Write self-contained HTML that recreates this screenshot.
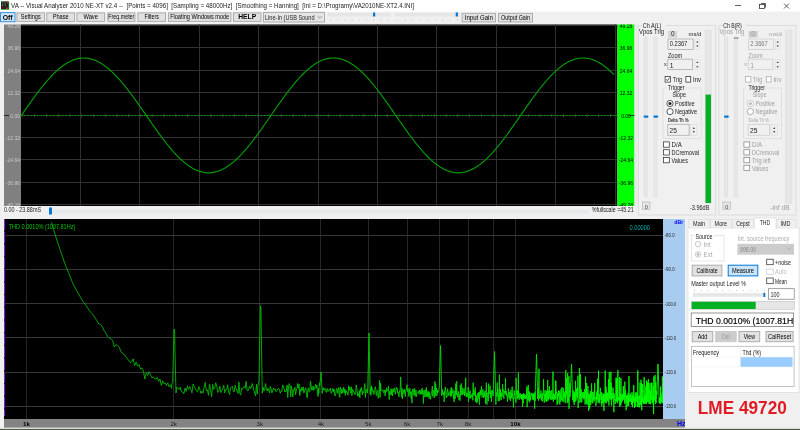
<!DOCTYPE html><html><head><meta charset="utf-8"><style>html,body{margin:0;padding:0;width:800px;height:430px;overflow:hidden;background:#f0f0f0}svg{display:block;will-change:transform;font-family:"Liberation Sans",sans-serif}</style></head><body><svg width="800" height="430" viewBox="0 0 800 430"><rect x="0" y="0" width="800" height="430" fill="#f0f0f0" />
<defs><linearGradient id="spg" gradientUnits="userSpaceOnUse" x1="170" y1="0" x2="663" y2="0"><stop offset="0" stop-color="#00b400"/><stop offset="0.5" stop-color="#00d000"/><stop offset="1" stop-color="#00ff00"/></linearGradient></defs>
<rect x="0" y="0" width="800" height="11.5" fill="#ffffff" />
<rect x="1" y="1.5" width="8.2" height="8.3" fill="#20c020" />
<rect x="1" y="1.5" width="7.6" height="7.6" fill="#1a1f24" />
<rect x="6.8" y="1.8" width="1.6" height="1.6" fill="#e02030" />
<rect x="2.2" y="6.6" width="1.6" height="1.8" fill="#b00010" />
<rect x="5.8" y="7.6" width="2" height="1.5" fill="#e03040" />
<rect x="4.6" y="2.6" width="1.2" height="1.2" fill="#908020" />
<rect x="2" y="4.4" width="1.2" height="1.2" fill="#a0a020" />
<rect x="4.6" y="4.6" width="1.2" height="1.2" fill="#40a0a0" />
<rect x="2.2" y="2.2" width="1.2" height="1.2" fill="#3080a0" />
<text x="11" y="8.3" font-size="6.6" fill="#222" font-weight="normal" text-anchor="start" font-family="Liberation Sans" textLength="403" lengthAdjust="spacingAndGlyphs" style="white-space:pre">VA -- Visual Analyser 2010 NE-XT v2.4 --  [Points = 4096]  [Sampling = 48000Hz]  [Smoothing = Hanning]  [Ini = D:\Programy\VA2010NE-XT2.4.INI]</text>
<line x1="735" y1="5.5" x2="741" y2="5.5" stroke="#333" stroke-width="0.8" />
<rect x="759.5" y="4.5" width="5" height="4" fill="none" stroke="#333" stroke-width="0.8" />
<line x1="761" y1="3.5" x2="765.5" y2="3.5" stroke="#333" stroke-width="0.8" />
<line x1="765.5" y1="3.5" x2="765.5" y2="7.5" stroke="#333" stroke-width="0.8" />
<line x1="784" y1="3.5" x2="789" y2="8.5" stroke="#333" stroke-width="0.8" />
<line x1="789" y1="3.5" x2="784" y2="8.5" stroke="#333" stroke-width="0.8" />
<rect x="0.5" y="12.6" width="14.5" height="9.099999999999998" fill="#cce4f7" stroke="#3c8fd8" stroke-width="1" />
<text x="7.7" y="20.3" font-size="6.8" fill="#000" font-weight="bold" text-anchor="middle" font-family="Liberation Sans" textLength="10" lengthAdjust="spacingAndGlyphs" >Off</text>
<rect x="16.9" y="12.9" width="27.6" height="8.499999999999998" fill="#e1e1e1" stroke="#adadad" stroke-width="1" />
<text x="30.7" y="19.189999999999998" font-size="6.5" fill="#000" font-weight="normal" text-anchor="middle" font-family="Liberation Sans" textLength="20" lengthAdjust="spacingAndGlyphs" >Settings</text>
<rect x="46.8" y="12.9" width="27.700000000000003" height="8.499999999999998" fill="#e1e1e1" stroke="#adadad" stroke-width="1" />
<text x="60.65" y="19.189999999999998" font-size="6.5" fill="#000" font-weight="normal" text-anchor="middle" font-family="Liberation Sans" textLength="16" lengthAdjust="spacingAndGlyphs" >Phase</text>
<rect x="76.9" y="12.9" width="27.599999999999994" height="8.499999999999998" fill="#e1e1e1" stroke="#adadad" stroke-width="1" />
<text x="90.7" y="19.189999999999998" font-size="6.5" fill="#000" font-weight="normal" text-anchor="middle" font-family="Liberation Sans" textLength="14.5" lengthAdjust="spacingAndGlyphs" >Wave</text>
<rect x="107.8" y="12.9" width="27.10000000000001" height="8.499999999999998" fill="#e1e1e1" stroke="#adadad" stroke-width="1" />
<text x="121.35" y="19.189999999999998" font-size="6.5" fill="#000" font-weight="normal" text-anchor="middle" font-family="Liberation Sans" textLength="26" lengthAdjust="spacingAndGlyphs" >Freq.meter</text>
<rect x="137.9" y="12.9" width="27.599999999999994" height="8.499999999999998" fill="#e1e1e1" stroke="#adadad" stroke-width="1" />
<text x="151.7" y="19.189999999999998" font-size="6.5" fill="#000" font-weight="normal" text-anchor="middle" font-family="Liberation Sans" textLength="14.5" lengthAdjust="spacingAndGlyphs" >Filters</text>
<rect x="168.5" y="12.9" width="62.400000000000006" height="8.499999999999998" fill="#e1e1e1" stroke="#adadad" stroke-width="1" />
<text x="199.7" y="19.189999999999998" font-size="6.5" fill="#000" font-weight="normal" text-anchor="middle" font-family="Liberation Sans" textLength="59" lengthAdjust="spacingAndGlyphs" >Floating Windows mode</text>
<rect x="233.5" y="12.9" width="27.5" height="8.499999999999998" fill="#e1e1e1" stroke="#adadad" stroke-width="1" />
<text x="247.25" y="19.298" font-size="6.8" fill="#000" font-weight="bold" text-anchor="middle" font-family="Liberation Sans" textLength="18" lengthAdjust="spacingAndGlyphs" >HELP</text>
<rect x="263.5" y="12.4" width="61" height="9.6" fill="#e5e5e5" stroke="#adadad" stroke-width="1" />
<text x="265" y="19.9" font-size="6.8" fill="#222" font-weight="normal" text-anchor="start" font-family="Liberation Sans" textLength="49.5" lengthAdjust="spacingAndGlyphs" >Line-In (USB Sound</text>
<polyline points="317.8,16 320,18.2 322.2,16" fill="none" stroke="#666" stroke-width="0.6"/>
<rect x="328" y="13.5" width="62" height="2.5" fill="#e7e7e7" stroke="#dcdcdc" stroke-width="0.5" />
<rect x="330.0" y="19.5" width="0.6" height="1" fill="#aaa" />
<rect x="337.25" y="19.5" width="0.6" height="1" fill="#aaa" />
<rect x="344.5" y="19.5" width="0.6" height="1" fill="#aaa" />
<rect x="351.75" y="19.5" width="0.6" height="1" fill="#aaa" />
<rect x="359.0" y="19.5" width="0.6" height="1" fill="#aaa" />
<rect x="366.25" y="19.5" width="0.6" height="1" fill="#aaa" />
<rect x="373.5" y="19.5" width="0.6" height="1" fill="#aaa" />
<rect x="380.75" y="19.5" width="0.6" height="1" fill="#aaa" />
<rect x="388.0" y="19.5" width="0.6" height="1" fill="#aaa" />
<rect x="373" y="12.5" width="2.2" height="4" fill="#0078d7" />
<rect x="395.6" y="13.5" width="63.39999999999998" height="2.5" fill="#e7e7e7" stroke="#dcdcdc" stroke-width="0.5" />
<rect x="397.6" y="19.5" width="0.6" height="1" fill="#aaa" />
<rect x="405.02500000000003" y="19.5" width="0.6" height="1" fill="#aaa" />
<rect x="412.45000000000005" y="19.5" width="0.6" height="1" fill="#aaa" />
<rect x="419.875" y="19.5" width="0.6" height="1" fill="#aaa" />
<rect x="427.3" y="19.5" width="0.6" height="1" fill="#aaa" />
<rect x="434.725" y="19.5" width="0.6" height="1" fill="#aaa" />
<rect x="442.15" y="19.5" width="0.6" height="1" fill="#aaa" />
<rect x="449.575" y="19.5" width="0.6" height="1" fill="#aaa" />
<rect x="457.0" y="19.5" width="0.6" height="1" fill="#aaa" />
<rect x="455.7" y="12.5" width="2.2" height="4" fill="#0078d7" />
<rect x="462.1" y="13.4" width="33.39999999999998" height="8.499999999999998" fill="#e1e1e1" stroke="#adadad" stroke-width="1" />
<text x="478.8" y="19.689999999999998" font-size="6.5" fill="#000" font-weight="normal" text-anchor="middle" font-family="Liberation Sans" textLength="28" lengthAdjust="spacingAndGlyphs" >Input Gain</text>
<rect x="498.5" y="13.4" width="34" height="8.499999999999998" fill="#e1e1e1" stroke="#adadad" stroke-width="1" />
<text x="515.5" y="19.689999999999998" font-size="6.5" fill="#000" font-weight="normal" text-anchor="middle" font-family="Liberation Sans" textLength="29" lengthAdjust="spacingAndGlyphs" >Output Gain</text>
<rect x="4" y="24.5" width="17" height="181.5" fill="#808080" />
<rect x="21" y="24.5" width="596.4" height="181.5" fill="#000" />
<line x1="80.5" y1="24.5" x2="80.5" y2="206" stroke="#303030" stroke-width="1" />
<line x1="139.5" y1="24.5" x2="139.5" y2="206" stroke="#303030" stroke-width="1" />
<line x1="199.5" y1="24.5" x2="199.5" y2="206" stroke="#303030" stroke-width="1" />
<line x1="258.5" y1="24.5" x2="258.5" y2="206" stroke="#303030" stroke-width="1" />
<line x1="318.5" y1="24.5" x2="318.5" y2="206" stroke="#303030" stroke-width="1" />
<line x1="377.5" y1="24.5" x2="377.5" y2="206" stroke="#303030" stroke-width="1" />
<line x1="436.5" y1="24.5" x2="436.5" y2="206" stroke="#303030" stroke-width="1" />
<line x1="496.5" y1="24.5" x2="496.5" y2="206" stroke="#303030" stroke-width="1" />
<line x1="555.5" y1="24.5" x2="555.5" y2="206" stroke="#303030" stroke-width="1" />
<line x1="615.5" y1="24.5" x2="615.5" y2="206" stroke="#303030" stroke-width="1" />
<line x1="21" y1="25.5" x2="617.4" y2="25.5" stroke="#323232" stroke-width="1" />
<line x1="21" y1="47.5" x2="617.4" y2="47.5" stroke="#323232" stroke-width="1" />
<line x1="21" y1="70.5" x2="617.4" y2="70.5" stroke="#323232" stroke-width="1" />
<line x1="21" y1="92.5" x2="617.4" y2="92.5" stroke="#323232" stroke-width="1" />
<line x1="21" y1="115.5" x2="617.4" y2="115.5" stroke="#323232" stroke-width="1" />
<line x1="21" y1="137.5" x2="617.4" y2="137.5" stroke="#323232" stroke-width="1" />
<line x1="21" y1="159.5" x2="617.4" y2="159.5" stroke="#323232" stroke-width="1" />
<line x1="21" y1="182.5" x2="617.4" y2="182.5" stroke="#323232" stroke-width="1" />
<line x1="21" y1="204.5" x2="617.4" y2="204.5" stroke="#323232" stroke-width="1" />
<clipPath id="scc"><rect x="0" y="24.5" width="800" height="181.5"/></clipPath><g clip-path="url(#scc)">
<text x="20" y="27.6" font-size="5" fill="#c8c8c8" font-weight="normal" text-anchor="end" font-family="Liberation Sans" >49.28</text>
<text x="20" y="49.6" font-size="5" fill="#c8c8c8" font-weight="normal" text-anchor="end" font-family="Liberation Sans" >36.96</text>
<text x="20" y="72.6" font-size="5" fill="#c8c8c8" font-weight="normal" text-anchor="end" font-family="Liberation Sans" >24.64</text>
<text x="20" y="94.6" font-size="5" fill="#c8c8c8" font-weight="normal" text-anchor="end" font-family="Liberation Sans" >12.32</text>
<text x="20" y="117.6" font-size="5" fill="#c8c8c8" font-weight="normal" text-anchor="end" font-family="Liberation Sans" >0.00</text>
<text x="20" y="139.6" font-size="5" fill="#c8c8c8" font-weight="normal" text-anchor="end" font-family="Liberation Sans" >-12.32</text>
<text x="20" y="161.6" font-size="5" fill="#c8c8c8" font-weight="normal" text-anchor="end" font-family="Liberation Sans" >-24.64</text>
<text x="20" y="184.6" font-size="5" fill="#c8c8c8" font-weight="normal" text-anchor="end" font-family="Liberation Sans" >-36.96</text>
<text x="20" y="206.6" font-size="5" fill="#c8c8c8" font-weight="normal" text-anchor="end" font-family="Liberation Sans" >-49.28</text>
</g>
<line x1="4" y1="115.5" x2="9" y2="115.5" stroke="#111" stroke-width="0.8" />
<line x1="23.0" y1="113.5" x2="23.0" y2="117.5" stroke="#505050" stroke-width="0.6" />
<line x1="34.75" y1="113.5" x2="34.75" y2="117.5" stroke="#505050" stroke-width="0.6" />
<line x1="46.5" y1="113.5" x2="46.5" y2="117.5" stroke="#505050" stroke-width="0.6" />
<line x1="58.25" y1="113.5" x2="58.25" y2="117.5" stroke="#505050" stroke-width="0.6" />
<line x1="70.0" y1="113.5" x2="70.0" y2="117.5" stroke="#505050" stroke-width="0.6" />
<line x1="81.75" y1="113.5" x2="81.75" y2="117.5" stroke="#505050" stroke-width="0.6" />
<line x1="93.5" y1="113.5" x2="93.5" y2="117.5" stroke="#505050" stroke-width="0.6" />
<line x1="105.25" y1="113.5" x2="105.25" y2="117.5" stroke="#505050" stroke-width="0.6" />
<line x1="117.0" y1="113.5" x2="117.0" y2="117.5" stroke="#505050" stroke-width="0.6" />
<line x1="128.75" y1="113.5" x2="128.75" y2="117.5" stroke="#505050" stroke-width="0.6" />
<line x1="140.5" y1="113.5" x2="140.5" y2="117.5" stroke="#505050" stroke-width="0.6" />
<line x1="152.25" y1="113.5" x2="152.25" y2="117.5" stroke="#505050" stroke-width="0.6" />
<line x1="164.0" y1="113.5" x2="164.0" y2="117.5" stroke="#505050" stroke-width="0.6" />
<line x1="175.75" y1="113.5" x2="175.75" y2="117.5" stroke="#505050" stroke-width="0.6" />
<line x1="187.5" y1="113.5" x2="187.5" y2="117.5" stroke="#505050" stroke-width="0.6" />
<line x1="199.25" y1="113.5" x2="199.25" y2="117.5" stroke="#505050" stroke-width="0.6" />
<line x1="211.0" y1="113.5" x2="211.0" y2="117.5" stroke="#505050" stroke-width="0.6" />
<line x1="222.75" y1="113.5" x2="222.75" y2="117.5" stroke="#505050" stroke-width="0.6" />
<line x1="234.5" y1="113.5" x2="234.5" y2="117.5" stroke="#505050" stroke-width="0.6" />
<line x1="246.25" y1="113.5" x2="246.25" y2="117.5" stroke="#505050" stroke-width="0.6" />
<line x1="258.0" y1="113.5" x2="258.0" y2="117.5" stroke="#505050" stroke-width="0.6" />
<line x1="269.75" y1="113.5" x2="269.75" y2="117.5" stroke="#505050" stroke-width="0.6" />
<line x1="281.5" y1="113.5" x2="281.5" y2="117.5" stroke="#505050" stroke-width="0.6" />
<line x1="293.25" y1="113.5" x2="293.25" y2="117.5" stroke="#505050" stroke-width="0.6" />
<line x1="305.0" y1="113.5" x2="305.0" y2="117.5" stroke="#505050" stroke-width="0.6" />
<line x1="316.75" y1="113.5" x2="316.75" y2="117.5" stroke="#505050" stroke-width="0.6" />
<line x1="328.5" y1="113.5" x2="328.5" y2="117.5" stroke="#505050" stroke-width="0.6" />
<line x1="340.25" y1="113.5" x2="340.25" y2="117.5" stroke="#505050" stroke-width="0.6" />
<line x1="352.0" y1="113.5" x2="352.0" y2="117.5" stroke="#505050" stroke-width="0.6" />
<line x1="363.75" y1="113.5" x2="363.75" y2="117.5" stroke="#505050" stroke-width="0.6" />
<line x1="375.5" y1="113.5" x2="375.5" y2="117.5" stroke="#505050" stroke-width="0.6" />
<line x1="387.25" y1="113.5" x2="387.25" y2="117.5" stroke="#505050" stroke-width="0.6" />
<line x1="399.0" y1="113.5" x2="399.0" y2="117.5" stroke="#505050" stroke-width="0.6" />
<line x1="410.75" y1="113.5" x2="410.75" y2="117.5" stroke="#505050" stroke-width="0.6" />
<line x1="422.5" y1="113.5" x2="422.5" y2="117.5" stroke="#505050" stroke-width="0.6" />
<line x1="434.25" y1="113.5" x2="434.25" y2="117.5" stroke="#505050" stroke-width="0.6" />
<line x1="446.0" y1="113.5" x2="446.0" y2="117.5" stroke="#505050" stroke-width="0.6" />
<line x1="457.75" y1="113.5" x2="457.75" y2="117.5" stroke="#505050" stroke-width="0.6" />
<line x1="469.5" y1="113.5" x2="469.5" y2="117.5" stroke="#505050" stroke-width="0.6" />
<line x1="481.25" y1="113.5" x2="481.25" y2="117.5" stroke="#505050" stroke-width="0.6" />
<line x1="493.0" y1="113.5" x2="493.0" y2="117.5" stroke="#505050" stroke-width="0.6" />
<line x1="504.75" y1="113.5" x2="504.75" y2="117.5" stroke="#505050" stroke-width="0.6" />
<line x1="516.5" y1="113.5" x2="516.5" y2="117.5" stroke="#505050" stroke-width="0.6" />
<line x1="528.25" y1="113.5" x2="528.25" y2="117.5" stroke="#505050" stroke-width="0.6" />
<line x1="540.0" y1="113.5" x2="540.0" y2="117.5" stroke="#505050" stroke-width="0.6" />
<line x1="551.75" y1="113.5" x2="551.75" y2="117.5" stroke="#505050" stroke-width="0.6" />
<line x1="563.5" y1="113.5" x2="563.5" y2="117.5" stroke="#505050" stroke-width="0.6" />
<line x1="575.25" y1="113.5" x2="575.25" y2="117.5" stroke="#505050" stroke-width="0.6" />
<line x1="587.0" y1="113.5" x2="587.0" y2="117.5" stroke="#505050" stroke-width="0.6" />
<line x1="598.75" y1="113.5" x2="598.75" y2="117.5" stroke="#505050" stroke-width="0.6" />
<line x1="610.5" y1="113.5" x2="610.5" y2="117.5" stroke="#505050" stroke-width="0.6" />
<line x1="21" y1="115.5" x2="617.4" y2="115.5" stroke="#009c00" stroke-width="1.1" stroke-dasharray="1.7,1.45"/>
<polyline points="21.0,116.0 21.5,115.3 22.0,114.5 22.5,113.8 23.0,113.1 23.5,112.4 24.0,111.6 24.5,110.9 25.0,110.2 25.5,109.5 26.0,108.8 26.5,108.1 27.0,107.3 27.5,106.6 28.0,105.9 28.5,105.2 29.0,104.5 29.5,103.8 30.0,103.1 30.5,102.4 31.0,101.7 31.5,101.0 32.0,100.3 32.5,99.6 33.0,98.9 33.5,98.2 34.0,97.5 34.5,96.8 35.0,96.1 35.5,95.5 36.0,94.8 36.5,94.1 37.0,93.4 37.5,92.8 38.0,92.1 38.5,91.4 39.0,90.8 39.5,90.1 40.0,89.5 40.5,88.9 41.0,88.2 41.5,87.6 42.0,87.0 42.5,86.3 43.0,85.7 43.5,85.1 44.0,84.5 44.5,83.9 45.0,83.3 45.5,82.7 46.0,82.1 46.5,81.5 47.0,80.9 47.5,80.3 48.0,79.8 48.5,79.2 49.0,78.7 49.5,78.1 50.0,77.6 50.5,77.0 51.0,76.5 51.5,76.0 52.0,75.4 52.5,74.9 53.0,74.4 53.5,73.9 54.0,73.4 54.5,72.9 55.0,72.4 55.5,72.0 56.0,71.5 56.5,71.0 57.0,70.6 57.5,70.1 58.0,69.7 58.5,69.3 59.0,68.8 59.5,68.4 60.0,68.0 60.5,67.6 61.0,67.2 61.5,66.8 62.0,66.4 62.5,66.1 63.0,65.7 63.5,65.3 64.0,65.0 64.5,64.6 65.0,64.3 65.5,64.0 66.0,63.7 66.5,63.4 67.0,63.1 67.5,62.8 68.0,62.5 68.5,62.2 69.0,61.9 69.5,61.7 70.0,61.4 70.5,61.2 71.0,61.0 71.5,60.7 72.0,60.5 72.5,60.3 73.0,60.1 73.5,59.9 74.0,59.7 74.5,59.6 75.0,59.4 75.5,59.2 76.0,59.1 76.5,59.0 77.0,58.8 77.5,58.7 78.0,58.6 78.5,58.5 79.0,58.4 79.5,58.3 80.0,58.3 80.5,58.2 81.0,58.1 81.5,58.1 82.0,58.1 82.5,58.0 83.0,58.0 83.5,58.0 84.0,58.0 84.5,58.0 85.0,58.0 85.5,58.1 86.0,58.1 86.5,58.1 87.0,58.2 87.5,58.2 88.0,58.3 88.5,58.4 89.0,58.5 89.5,58.6 90.0,58.7 90.5,58.8 91.0,58.9 91.5,59.1 92.0,59.2 92.5,59.4 93.0,59.5 93.5,59.7 94.0,59.9 94.5,60.1 95.0,60.3 95.5,60.5 96.0,60.7 96.5,60.9 97.0,61.1 97.5,61.4 98.0,61.6 98.5,61.9 99.0,62.2 99.5,62.4 100.0,62.7 100.5,63.0 101.0,63.3 101.5,63.6 102.0,63.9 102.5,64.2 103.0,64.6 103.5,64.9 104.0,65.3 104.5,65.6 105.0,66.0 105.5,66.4 106.0,66.7 106.5,67.1 107.0,67.5 107.5,67.9 108.0,68.3 108.5,68.7 109.0,69.2 109.5,69.6 110.0,70.0 110.5,70.5 111.0,70.9 111.5,71.4 112.0,71.9 112.5,72.3 113.0,72.8 113.5,73.3 114.0,73.8 114.5,74.3 115.0,74.8 115.5,75.3 116.0,75.8 116.5,76.4 117.0,76.9 117.5,77.4 118.0,78.0 118.5,78.5 119.0,79.1 119.5,79.7 120.0,80.2 120.5,80.8 121.0,81.4 121.5,82.0 122.0,82.6 122.5,83.2 123.0,83.8 123.5,84.4 124.0,85.0 124.5,85.6 125.0,86.2 125.5,86.8 126.0,87.5 126.5,88.1 127.0,88.7 127.5,89.4 128.0,90.0 128.5,90.7 129.0,91.3 129.5,92.0 130.0,92.6 130.5,93.3 131.0,94.0 131.5,94.6 132.0,95.3 132.5,96.0 133.0,96.7 133.5,97.4 134.0,98.0 134.5,98.7 135.0,99.4 135.5,100.1 136.0,100.8 136.5,101.5 137.0,102.2 137.5,102.9 138.0,103.6 138.5,104.3 139.0,105.1 139.5,105.8 140.0,106.5 140.5,107.2 141.0,107.9 141.5,108.6 142.0,109.3 142.5,110.1 143.0,110.8 143.5,111.5 144.0,112.2 144.5,112.9 145.0,113.7 145.5,114.4 146.0,115.1 146.5,115.8 147.0,116.6 147.5,117.3 148.0,118.0 148.5,118.7 149.0,119.4 149.5,120.2 150.0,120.9 150.5,121.6 151.0,122.3 151.5,123.0 152.0,123.8 152.5,124.5 153.0,125.2 153.5,125.9 154.0,126.6 154.5,127.3 155.0,128.0 155.5,128.7 156.0,129.4 156.5,130.1 157.0,130.8 157.5,131.5 158.0,132.2 158.5,132.9 159.0,133.6 159.5,134.3 160.0,134.9 160.5,135.6 161.0,136.3 161.5,137.0 162.0,137.6 162.5,138.3 163.0,139.0 163.5,139.6 164.0,140.3 164.5,140.9 165.0,141.6 165.5,142.2 166.0,142.8 166.5,143.5 167.0,144.1 167.5,144.7 168.0,145.3 168.5,146.0 169.0,146.6 169.5,147.2 170.0,147.8 170.5,148.4 171.0,149.0 171.5,149.5 172.0,150.1 172.5,150.7 173.0,151.3 173.5,151.8 174.0,152.4 174.5,152.9 175.0,153.5 175.5,154.0 176.0,154.5 176.5,155.1 177.0,155.6 177.5,156.1 178.0,156.6 178.5,157.1 179.0,157.6 179.5,158.1 180.0,158.6 180.5,159.0 181.0,159.5 181.5,160.0 182.0,160.4 182.5,160.9 183.0,161.3 183.5,161.7 184.0,162.1 184.5,162.6 185.0,163.0 185.5,163.4 186.0,163.8 186.5,164.1 187.0,164.5 187.5,164.9 188.0,165.3 188.5,165.6 189.0,166.0 189.5,166.3 190.0,166.6 190.5,166.9 191.0,167.3 191.5,167.6 192.0,167.9 192.5,168.2 193.0,168.4 193.5,168.7 194.0,169.0 194.5,169.2 195.0,169.5 195.5,169.7 196.0,169.9 196.5,170.2 197.0,170.4 197.5,170.6 198.0,170.8 198.5,171.0 199.0,171.1 199.5,171.3 200.0,171.5 200.5,171.6 201.0,171.8 201.5,171.9 202.0,172.0 202.5,172.1 203.0,172.2 203.5,172.3 204.0,172.4 204.5,172.5 205.0,172.6 205.5,172.6 206.0,172.7 206.5,172.7 207.0,172.8 207.5,172.8 208.0,172.8 208.5,172.8 209.0,172.8 209.5,172.8 210.0,172.8 210.5,172.7 211.0,172.7 211.5,172.6 212.0,172.6 212.5,172.5 213.0,172.4 213.5,172.4 214.0,172.3 214.5,172.2 215.0,172.1 215.5,171.9 216.0,171.8 216.5,171.7 217.0,171.5 217.5,171.4 218.0,171.2 218.5,171.0 219.0,170.8 219.5,170.7 220.0,170.5 220.5,170.2 221.0,170.0 221.5,169.8 222.0,169.6 222.5,169.3 223.0,169.1 223.5,168.8 224.0,168.5 224.5,168.3 225.0,168.0 225.5,167.7 226.0,167.4 226.5,167.1 227.0,166.8 227.5,166.4 228.0,166.1 228.5,165.7 229.0,165.4 229.5,165.0 230.0,164.7 230.5,164.3 231.0,163.9 231.5,163.5 232.0,163.1 232.5,162.7 233.0,162.3 233.5,161.9 234.0,161.5 234.5,161.0 235.0,160.6 235.5,160.1 236.0,159.7 236.5,159.2 237.0,158.7 237.5,158.3 238.0,157.8 238.5,157.3 239.0,156.8 239.5,156.3 240.0,155.8 240.5,155.3 241.0,154.7 241.5,154.2 242.0,153.7 242.5,153.1 243.0,152.6 243.5,152.0 244.0,151.5 244.5,150.9 245.0,150.3 245.5,149.8 246.0,149.2 246.5,148.6 247.0,148.0 247.5,147.4 248.0,146.8 248.5,146.2 249.0,145.6 249.5,145.0 250.0,144.3 250.5,143.7 251.0,143.1 251.5,142.5 252.0,141.8 252.5,141.2 253.0,140.5 253.5,139.9 254.0,139.2 254.5,138.6 255.0,137.9 255.5,137.2 256.0,136.6 256.5,135.9 257.0,135.2 257.5,134.5 258.0,133.9 258.5,133.2 259.0,132.5 259.5,131.8 260.0,131.1 260.5,130.4 261.0,129.7 261.5,129.0 262.0,128.3 262.5,127.6 263.0,126.9 263.5,126.2 264.0,125.5 264.5,124.8 265.0,124.0 265.5,123.3 266.0,122.6 266.5,121.9 267.0,121.2 267.5,120.5 268.0,119.7 268.5,119.0 269.0,118.3 269.5,117.6 270.0,116.8 270.5,116.1 271.0,115.4 271.5,114.7 272.0,114.0 272.5,113.2 273.0,112.5 273.5,111.8 274.0,111.1 274.5,110.3 275.0,109.6 275.5,108.9 276.0,108.2 276.5,107.5 277.0,106.8 277.5,106.0 278.0,105.3 278.5,104.6 279.0,103.9 279.5,103.2 280.0,102.5 280.5,101.8 281.0,101.1 281.5,100.4 282.0,99.7 282.5,99.0 283.0,98.3 283.5,97.6 284.0,96.9 284.5,96.3 285.0,95.6 285.5,94.9 286.0,94.2 286.5,93.6 287.0,92.9 287.5,92.2 288.0,91.6 288.5,90.9 289.0,90.3 289.5,89.6 290.0,89.0 290.5,88.3 291.0,87.7 291.5,87.1 292.0,86.5 292.5,85.8 293.0,85.2 293.5,84.6 294.0,84.0 294.5,83.4 295.0,82.8 295.5,82.2 296.0,81.6 296.5,81.0 297.0,80.5 297.5,79.9 298.0,79.3 298.5,78.8 299.0,78.2 299.5,77.7 300.0,77.1 300.5,76.6 301.0,76.1 301.5,75.5 302.0,75.0 302.5,74.5 303.0,74.0 303.5,73.5 304.0,73.0 304.5,72.5 305.0,72.1 305.5,71.6 306.0,71.1 306.5,70.7 307.0,70.2 307.5,69.8 308.0,69.3 308.5,68.9 309.0,68.5 309.5,68.1 310.0,67.7 310.5,67.3 311.0,66.9 311.5,66.5 312.0,66.1 312.5,65.8 313.0,65.4 313.5,65.1 314.0,64.7 314.5,64.4 315.0,64.0 315.5,63.7 316.0,63.4 316.5,63.1 317.0,62.8 317.5,62.5 318.0,62.3 318.5,62.0 319.0,61.7 319.5,61.5 320.0,61.2 320.5,61.0 321.0,60.8 321.5,60.6 322.0,60.3 322.5,60.1 323.0,60.0 323.5,59.8 324.0,59.6 324.5,59.4 325.0,59.3 325.5,59.1 326.0,59.0 326.5,58.9 327.0,58.7 327.5,58.6 328.0,58.5 328.5,58.4 329.0,58.4 329.5,58.3 330.0,58.2 330.5,58.2 331.0,58.1 331.5,58.1 332.0,58.0 332.5,58.0 333.0,58.0 333.5,58.0 334.0,58.0 334.5,58.0 335.0,58.0 335.5,58.1 336.0,58.1 336.5,58.2 337.0,58.2 337.5,58.3 338.0,58.4 338.5,58.5 339.0,58.6 339.5,58.7 340.0,58.8 340.5,58.9 341.0,59.0 341.5,59.2 342.0,59.3 342.5,59.5 343.0,59.7 343.5,59.8 344.0,60.0 344.5,60.2 345.0,60.4 345.5,60.6 346.0,60.9 346.5,61.1 347.0,61.3 347.5,61.6 348.0,61.8 348.5,62.1 349.0,62.4 349.5,62.6 350.0,62.9 350.5,63.2 351.0,63.5 351.5,63.9 352.0,64.2 352.5,64.5 353.0,64.8 353.5,65.2 354.0,65.5 354.5,65.9 355.0,66.3 355.5,66.7 356.0,67.0 356.5,67.4 357.0,67.8 357.5,68.2 358.0,68.7 358.5,69.1 359.0,69.5 359.5,69.9 360.0,70.4 360.5,70.8 361.0,71.3 361.5,71.8 362.0,72.2 362.5,72.7 363.0,73.2 363.5,73.7 364.0,74.2 364.5,74.7 365.0,75.2 365.5,75.7 366.0,76.3 366.5,76.8 367.0,77.3 367.5,77.9 368.0,78.4 368.5,79.0 369.0,79.5 369.5,80.1 370.0,80.7 370.5,81.3 371.0,81.8 371.5,82.4 372.0,83.0 372.5,83.6 373.0,84.2 373.5,84.8 374.0,85.5 374.5,86.1 375.0,86.7 375.5,87.3 376.0,88.0 376.5,88.6 377.0,89.2 377.5,89.9 378.0,90.5 378.5,91.2 379.0,91.8 379.5,92.5 380.0,93.2 380.5,93.8 381.0,94.5 381.5,95.2 382.0,95.9 382.5,96.5 383.0,97.2 383.5,97.9 384.0,98.6 384.5,99.3 385.0,100.0 385.5,100.7 386.0,101.4 386.5,102.1 387.0,102.8 387.5,103.5 388.0,104.2 388.5,104.9 389.0,105.6 389.5,106.3 390.0,107.0 390.5,107.8 391.0,108.5 391.5,109.2 392.0,109.9 392.5,110.6 393.0,111.4 393.5,112.1 394.0,112.8 394.5,113.5 395.0,114.2 395.5,115.0 396.0,115.7 396.5,116.4 397.0,117.1 397.5,117.9 398.0,118.6 398.5,119.3 399.0,120.0 399.5,120.7 400.0,121.5 400.5,122.2 401.0,122.9 401.5,123.6 402.0,124.3 402.5,125.0 403.0,125.7 403.5,126.5 404.0,127.2 404.5,127.9 405.0,128.6 405.5,129.3 406.0,130.0 406.5,130.7 407.0,131.4 407.5,132.1 408.0,132.8 408.5,133.4 409.0,134.1 409.5,134.8 410.0,135.5 410.5,136.2 411.0,136.8 411.5,137.5 412.0,138.2 412.5,138.8 413.0,139.5 413.5,140.1 414.0,140.8 414.5,141.4 415.0,142.1 415.5,142.7 416.0,143.3 416.5,144.0 417.0,144.6 417.5,145.2 418.0,145.8 418.5,146.4 419.0,147.0 419.5,147.6 420.0,148.2 420.5,148.8 421.0,149.4 421.5,150.0 422.0,150.6 422.5,151.1 423.0,151.7 423.5,152.3 424.0,152.8 424.5,153.4 425.0,153.9 425.5,154.4 426.0,155.0 426.5,155.5 427.0,156.0 427.5,156.5 428.0,157.0 428.5,157.5 429.0,158.0 429.5,158.5 430.0,158.9 430.5,159.4 431.0,159.9 431.5,160.3 432.0,160.8 432.5,161.2 433.0,161.6 433.5,162.1 434.0,162.5 434.5,162.9 435.0,163.3 435.5,163.7 436.0,164.1 436.5,164.4 437.0,164.8 437.5,165.2 438.0,165.5 438.5,165.9 439.0,166.2 439.5,166.6 440.0,166.9 440.5,167.2 441.0,167.5 441.5,167.8 442.0,168.1 442.5,168.4 443.0,168.6 443.5,168.9 444.0,169.2 444.5,169.4 445.0,169.7 445.5,169.9 446.0,170.1 446.5,170.3 447.0,170.5 447.5,170.7 448.0,170.9 448.5,171.1 449.0,171.3 449.5,171.4 450.0,171.6 450.5,171.7 451.0,171.9 451.5,172.0 452.0,172.1 452.5,172.2 453.0,172.3 453.5,172.4 454.0,172.5 454.5,172.6 455.0,172.6 455.5,172.7 456.0,172.7 456.5,172.7 457.0,172.8 457.5,172.8 458.0,172.8 458.5,172.8 459.0,172.8 459.5,172.8 460.0,172.7 460.5,172.7 461.0,172.7 461.5,172.6 462.0,172.5 462.5,172.5 463.0,172.4 463.5,172.3 464.0,172.2 464.5,172.1 465.0,172.0 465.5,171.8 466.0,171.7 466.5,171.6 467.0,171.4 467.5,171.2 468.0,171.1 468.5,170.9 469.0,170.7 469.5,170.5 470.0,170.3 470.5,170.1 471.0,169.8 471.5,169.6 472.0,169.4 472.5,169.1 473.0,168.9 473.5,168.6 474.0,168.3 474.5,168.0 475.0,167.7 475.5,167.4 476.0,167.1 476.5,166.8 477.0,166.5 477.5,166.2 478.0,165.8 478.5,165.5 479.0,165.1 479.5,164.7 480.0,164.4 480.5,164.0 481.0,163.6 481.5,163.2 482.0,162.8 482.5,162.4 483.0,162.0 483.5,161.5 484.0,161.1 484.5,160.7 485.0,160.2 485.5,159.8 486.0,159.3 486.5,158.8 487.0,158.4 487.5,157.9 488.0,157.4 488.5,156.9 489.0,156.4 489.5,155.9 490.0,155.4 490.5,154.8 491.0,154.3 491.5,153.8 492.0,153.2 492.5,152.7 493.0,152.1 493.5,151.6 494.0,151.0 494.5,150.5 495.0,149.9 495.5,149.3 496.0,148.7 496.5,148.1 497.0,147.5 497.5,146.9 498.0,146.3 498.5,145.7 499.0,145.1 499.5,144.5 500.0,143.8 500.5,143.2 501.0,142.6 501.5,141.9 502.0,141.3 502.5,140.7 503.0,140.0 503.5,139.4 504.0,138.7 504.5,138.0 505.0,137.4 505.5,136.7 506.0,136.0 506.5,135.3 507.0,134.7 507.5,134.0 508.0,133.3 508.5,132.6 509.0,131.9 509.5,131.2 510.0,130.5 510.5,129.8 511.0,129.1 511.5,128.4 512.0,127.7 512.5,127.0 513.0,126.3 513.5,125.6 514.0,124.9 514.5,124.2 515.0,123.5 515.5,122.7 516.0,122.0 516.5,121.3 517.0,120.6 517.5,119.9 518.0,119.2 518.5,118.4 519.0,117.7 519.5,117.0 520.0,116.3 520.5,115.5 521.0,114.8 521.5,114.1 522.0,113.4 522.5,112.7 523.0,111.9 523.5,111.2 524.0,110.5 524.5,109.8 525.0,109.1 525.5,108.3 526.0,107.6 526.5,106.9 527.0,106.2 527.5,105.5 528.0,104.8 528.5,104.1 529.0,103.4 529.5,102.6 530.0,101.9 530.5,101.2 531.0,100.5 531.5,99.8 532.0,99.2 532.5,98.5 533.0,97.8 533.5,97.1 534.0,96.4 534.5,95.7 535.0,95.0 535.5,94.4 536.0,93.7 536.5,93.0 537.0,92.4 537.5,91.7 538.0,91.1 538.5,90.4 539.0,89.8 539.5,89.1 540.0,88.5 540.5,87.8 541.0,87.2 541.5,86.6 542.0,86.0 542.5,85.3 543.0,84.7 543.5,84.1 544.0,83.5 544.5,82.9 545.0,82.3 545.5,81.7 546.0,81.1 546.5,80.6 547.0,80.0 547.5,79.4 548.0,78.9 548.5,78.3 549.0,77.8 549.5,77.2 550.0,76.7 550.5,76.2 551.0,75.6 551.5,75.1 552.0,74.6 552.5,74.1 553.0,73.6 553.5,73.1 554.0,72.6 554.5,72.1 555.0,71.7 555.5,71.2 556.0,70.8 556.5,70.3 557.0,69.9 557.5,69.4 558.0,69.0 558.5,68.6 559.0,68.2 559.5,67.8 560.0,67.4 560.5,67.0 561.0,66.6 561.5,66.2 562.0,65.8 562.5,65.5 563.0,65.1 563.5,64.8 564.0,64.4 564.5,64.1 565.0,63.8 565.5,63.5 566.0,63.2 566.5,62.9 567.0,62.6 567.5,62.3 568.0,62.0 568.5,61.8 569.0,61.5 569.5,61.3 570.0,61.0 570.5,60.8 571.0,60.6 571.5,60.4 572.0,60.2 572.5,60.0 573.0,59.8 573.5,59.6 574.0,59.5 574.5,59.3 575.0,59.2 575.5,59.0 576.0,58.9 576.5,58.8 577.0,58.7 577.5,58.5 578.0,58.5 578.5,58.4 579.0,58.3 579.5,58.2 580.0,58.2 580.5,58.1 581.0,58.1 581.5,58.0 582.0,58.0 582.5,58.0 583.0,58.0 583.5,58.0 584.0,58.0 584.5,58.0 585.0,58.1 585.5,58.1 586.0,58.2 586.5,58.2 587.0,58.3 587.5,58.4 588.0,58.5 588.5,58.5 589.0,58.7 589.5,58.8 590.0,58.9 590.5,59.0 591.0,59.2 591.5,59.3 592.0,59.5 592.5,59.6 593.0,59.8 593.5,60.0 594.0,60.2 594.5,60.4 595.0,60.6 595.5,60.8 596.0,61.0 596.5,61.3 597.0,61.5 597.5,61.8 598.0,62.0 598.5,62.3 599.0,62.6 599.5,62.9 600.0,63.2 600.5,63.5 601.0,63.8 601.5,64.1 602.0,64.4 602.5,64.8 603.0,65.1 603.5,65.5 604.0,65.8 604.5,66.2 605.0,66.6 605.5,67.0 606.0,67.4 606.5,67.8 607.0,68.2 607.5,68.6 608.0,69.0 608.5,69.4 609.0,69.9 609.5,70.3 610.0,70.8 610.5,71.2 611.0,71.7 611.5,72.1 612.0,72.6 612.5,73.1 613.0,73.6 613.5,74.1 614.0,74.6" fill="none" stroke="#00a000" stroke-width="1.15"/>
<rect x="617.4" y="24.5" width="17.100000000000023" height="181.5" fill="#00ff00" />
<g clip-path="url(#scc)">
<text x="626" y="27.6" font-size="5" fill="#000" font-weight="normal" text-anchor="middle" font-family="Liberation Sans" >49.28</text>
<text x="626" y="49.6" font-size="5" fill="#000" font-weight="normal" text-anchor="middle" font-family="Liberation Sans" >36.96</text>
<text x="626" y="72.6" font-size="5" fill="#000" font-weight="normal" text-anchor="middle" font-family="Liberation Sans" >24.64</text>
<text x="626" y="94.6" font-size="5" fill="#000" font-weight="normal" text-anchor="middle" font-family="Liberation Sans" >12.32</text>
<text x="626" y="117.6" font-size="5" fill="#000" font-weight="normal" text-anchor="middle" font-family="Liberation Sans" >0.00</text>
<text x="626" y="139.6" font-size="5" fill="#000" font-weight="normal" text-anchor="middle" font-family="Liberation Sans" >-12.32</text>
<text x="626" y="161.6" font-size="5" fill="#000" font-weight="normal" text-anchor="middle" font-family="Liberation Sans" >-24.64</text>
<text x="626" y="184.6" font-size="5" fill="#000" font-weight="normal" text-anchor="middle" font-family="Liberation Sans" >-36.96</text>
<text x="626" y="206.6" font-size="5" fill="#000" font-weight="normal" text-anchor="middle" font-family="Liberation Sans" >-49.28</text>
</g>
<line x1="629" y1="115.5" x2="636" y2="115.5" stroke="#111" stroke-width="0.8" />
<rect x="634.5" y="24.5" width="3" height="181.5" fill="#e8e8e8" />
<text x="4" y="211.7" font-size="6.6" fill="#222" font-weight="normal" text-anchor="start" font-family="Liberation Sans" textLength="37" lengthAdjust="spacingAndGlyphs" >0.00 - 23.88mS</text>
<rect x="52.5" y="209.3" width="536" height="4.5" fill="#e6e9ea" />
<rect x="49" y="207.5" width="3" height="7" fill="#0078d7" />
<text x="633.7" y="212.3" font-size="6.6" fill="#222" font-weight="normal" text-anchor="end" font-family="Liberation Sans" textLength="42" lengthAdjust="spacingAndGlyphs" >%fullscale =45.21</text>
<rect x="638.5" y="25.5" width="77" height="189.5" fill="none" stroke="#dcdcdc" stroke-width="1" />
<rect x="642" y="20" width="24" height="7" fill="#f0f0f0" />
<text x="642.8" y="27.6" font-size="6.6" fill="#222" font-weight="normal" text-anchor="start" font-family="Liberation Sans" textLength="18.6" lengthAdjust="spacingAndGlyphs" >Ch A(L)</text>
<text x="639" y="34.4" font-size="6.6" fill="#222" font-weight="normal" text-anchor="start" font-family="Liberation Sans" textLength="25" lengthAdjust="spacingAndGlyphs" >Vpos Trig</text>
<rect x="644" y="37" width="3.2" height="160" fill="#e7e7e7" stroke="#dcdcdc" stroke-width="0.5" />
<rect x="653.8" y="37" width="3.2" height="160" fill="#e7e7e7" stroke="#dcdcdc" stroke-width="0.5" />
<rect x="643.6" y="115.6" width="4.8" height="2.2" fill="#0078d7" rx="1"/>
<rect x="653.4" y="115.6" width="4.8" height="2.2" fill="#0078d7" rx="1"/>
<rect x="642.5" y="202" width="7.5" height="7.5" fill="#e5e5e5" stroke="#b0b0b0" stroke-width="0.6" />
<text x="646.3" y="208.5" font-size="5.5" fill="#444" font-weight="normal" text-anchor="middle" font-family="Liberation Sans" >0</text>
<rect x="668.6" y="31.3" width="8.2" height="5.8" fill="#d8d8d8" stroke="#c8c8c8" stroke-width="0.5" />
<text x="672.7" y="36.4" font-size="6.4" fill="#222" font-weight="normal" text-anchor="middle" font-family="Liberation Sans" >0</text>
<text x="701.4" y="35.5" font-size="6.2" fill="#222" font-weight="normal" text-anchor="end" font-family="Liberation Sans" textLength="12.8" lengthAdjust="spacingAndGlyphs" >ms/d</text>
<rect x="668" y="39" width="25.2" height="10.5" fill="#f0f0f0" stroke="#adadad" stroke-width="0.8" />
<text x="669.8" y="46" font-size="6.8" fill="#222" font-weight="normal" text-anchor="start" font-family="Liberation Sans" textLength="17.5" lengthAdjust="spacingAndGlyphs" >0.2367</text>
<rect x="694.9" y="39" width="4.8" height="10.5" fill="#f0f0f0" stroke="#dadada" stroke-width="0.5" />
<polygon points="696.1,42.4 697.3,40.9 698.5,42.4" fill="#333"/>
<polygon points="696.1,45.6 697.3,47.1 698.5,45.6" fill="#333"/>
<text x="668" y="57.9" font-size="6.8" fill="#222" font-weight="normal" text-anchor="start" font-family="Liberation Sans" textLength="14.1" lengthAdjust="spacingAndGlyphs" >Zoom</text>
<text x="663.9" y="66.3" font-size="5.5" fill="#222" font-weight="normal" text-anchor="start" font-family="Liberation Sans" >x</text>
<rect x="667.8" y="59.2" width="24.7" height="10.4" fill="#f0f0f0" stroke="#adadad" stroke-width="0.8" />
<text x="669.8" y="67.5" font-size="6.8" fill="#222" font-weight="normal" text-anchor="start" font-family="Liberation Sans" >1</text>
<rect x="694.9" y="59.5" width="4.8" height="10" fill="#f0f0f0" stroke="#dadada" stroke-width="0.5" />
<polygon points="696.1,63 697.3,61.5 698.5,63" fill="#333"/>
<polygon points="696.1,66.2 697.3,67.7 698.5,66.2" fill="#333"/>
<rect x="665.1" y="76.6" width="5.399999999999977" height="5.5" fill="#fff" stroke="#333" stroke-width="0.75" />
<polyline points="666.1,79.35 667.6,80.6 669.5,77.6" fill="none" stroke="#333" stroke-width="0.8"/>
<text x="672.7" y="82.4" font-size="6.8" fill="#222" font-weight="normal" text-anchor="start" font-family="Liberation Sans" textLength="9.3" lengthAdjust="spacingAndGlyphs" >Trig</text>
<rect x="685.9" y="76.6" width="4.800000000000068" height="5.5" fill="#fff" stroke="#333" stroke-width="0.75" />
<text x="693" y="82.4" font-size="6.8" fill="#222" font-weight="normal" text-anchor="start" font-family="Liberation Sans" textLength="8" lengthAdjust="spacingAndGlyphs" >Inv</text>
<rect x="663" y="88" width="38.2" height="50.5" fill="none" stroke="#dcdcdc" stroke-width="0.8" />
<rect x="665.5" y="85" width="20" height="5" fill="#f0f0f0" />
<text x="668" y="89.9" font-size="6.6" fill="#222" font-weight="normal" text-anchor="start" font-family="Liberation Sans" textLength="16.5" lengthAdjust="spacingAndGlyphs" >Trigger</text>
<text x="672.4" y="97.3" font-size="6.6" fill="#222" font-weight="normal" text-anchor="start" font-family="Liberation Sans" textLength="13.6" lengthAdjust="spacingAndGlyphs" >Slope</text>
<circle cx="670" cy="103.5" r="3.1" fill="#fff" stroke="#333" stroke-width="0.8"/>
<circle cx="670" cy="103.5" r="1.55" fill="#222"/>
<text x="675" y="106" font-size="6.6" fill="#222" font-weight="normal" text-anchor="start" font-family="Liberation Sans" textLength="19.5" lengthAdjust="spacingAndGlyphs" >Positive</text>
<circle cx="670" cy="111.6" r="3.1" fill="#fff" stroke="#333" stroke-width="0.8"/>
<text x="675" y="114.3" font-size="6.6" fill="#222" font-weight="normal" text-anchor="start" font-family="Liberation Sans" textLength="22" lengthAdjust="spacingAndGlyphs" >Negative</text>
<text x="668" y="121.7" font-size="5.6" fill="#333" font-weight="bold" text-anchor="start" font-family="Liberation Sans" textLength="20.5" lengthAdjust="spacingAndGlyphs" >Delta Th %</text>
<rect x="667.8" y="124.3" width="21.3" height="11" fill="#f0f0f0" stroke="#adadad" stroke-width="0.8" />
<text x="669.6" y="132.6" font-size="6.6" fill="#222" font-weight="normal" text-anchor="start" font-family="Liberation Sans" >25</text>
<rect x="690.6" y="124.6" width="6.4" height="10.6" fill="#f0f0f0" stroke="#cfcfcf" stroke-width="0.5" />
<polygon points="692.6,128.8 693.8,127.3 695,128.8" fill="#222"/>
<polygon points="692.6,131.3 693.8,132.8 695,131.3" fill="#222"/>
<rect x="663.5" y="141.9" width="5.7999999999999545" height="5.300000000000011" fill="#fff" stroke="#333" stroke-width="0.75" />
<text x="671.6" y="147.20000000000002" font-size="6.6" fill="#222" font-weight="normal" text-anchor="start" font-family="Liberation Sans" textLength="10.2" lengthAdjust="spacingAndGlyphs" >D/A</text>
<rect x="663.5" y="149.70000000000002" width="5.7999999999999545" height="5.300000000000011" fill="#fff" stroke="#333" stroke-width="0.75" />
<text x="671.6" y="155.00000000000003" font-size="6.6" fill="#222" font-weight="normal" text-anchor="start" font-family="Liberation Sans" textLength="27.3" lengthAdjust="spacingAndGlyphs" >DCremoval</text>
<rect x="663.5" y="157.5" width="5.7999999999999545" height="5.300000000000011" fill="#fff" stroke="#333" stroke-width="0.75" />
<text x="671.6" y="162.8" font-size="6.6" fill="#222" font-weight="normal" text-anchor="start" font-family="Liberation Sans" textLength="16.3" lengthAdjust="spacingAndGlyphs" >Values</text>
<rect x="705.1" y="30.2" width="6.4" height="173" fill="#e6e6e6" stroke="#dcdcdc" stroke-width="0.5" />
<rect x="705.5" y="94.6" width="5.5" height="108.4" fill="#06b025" />
<text x="709.4" y="210" font-size="6.6" fill="#222" font-weight="normal" text-anchor="end" font-family="Liberation Sans" textLength="19.5" lengthAdjust="spacingAndGlyphs" >-3.96dB</text>
<rect x="718.9" y="25.5" width="77" height="189.5" fill="none" stroke="#dcdcdc" stroke-width="1" />
<rect x="722.4" y="20" width="24" height="7" fill="#f0f0f0" />
<text x="723.1999999999999" y="27.6" font-size="6.6" fill="#222" font-weight="normal" text-anchor="start" font-family="Liberation Sans" textLength="18.6" lengthAdjust="spacingAndGlyphs" >Ch B(R)</text>
<text x="719.4" y="34.4" font-size="6.6" fill="#a0a0a0" font-weight="normal" text-anchor="start" font-family="Liberation Sans" textLength="25" lengthAdjust="spacingAndGlyphs" >Vpos Trig</text>
<rect x="724.4" y="37" width="3.2" height="160" fill="#e7e7e7" stroke="#dcdcdc" stroke-width="0.5" />
<rect x="734.1999999999999" y="37" width="3.2" height="160" fill="#e7e7e7" stroke="#dcdcdc" stroke-width="0.5" />
<rect x="724.0" y="115.6" width="4.8" height="2.2" fill="#0078d7" rx="1"/>
<rect x="733.8" y="37.2" width="4.8" height="1.8" fill="#a8a8a8" />
<rect x="722.9" y="202" width="7.5" height="7.5" fill="#e5e5e5" stroke="#b0b0b0" stroke-width="0.6" />
<text x="726.6999999999999" y="208.5" font-size="5.5" fill="#444" font-weight="normal" text-anchor="middle" font-family="Liberation Sans" >0</text>
<rect x="749.0" y="31.3" width="8.2" height="5.8" fill="#cacaca" stroke="#c8c8c8" stroke-width="0.5" />
<text x="753.1" y="36.4" font-size="6.4" fill="#a0a0a0" font-weight="normal" text-anchor="middle" font-family="Liberation Sans" >0</text>
<text x="781.8" y="35.5" font-size="6.2" fill="#a0a0a0" font-weight="normal" text-anchor="end" font-family="Liberation Sans" textLength="12.8" lengthAdjust="spacingAndGlyphs" >ms/d</text>
<rect x="748.4" y="39" width="25.2" height="10.5" fill="#f0f0f0" stroke="#cfcfcf" stroke-width="0.8" />
<text x="750.1999999999999" y="46" font-size="6.8" fill="#777" font-weight="normal" text-anchor="start" font-family="Liberation Sans" textLength="17.5" lengthAdjust="spacingAndGlyphs" >2.3667</text>
<rect x="775.3" y="39" width="4.8" height="10.5" fill="#f0f0f0" stroke="#dadada" stroke-width="0.5" />
<polygon points="776.5,42.4 777.6999999999999,40.9 778.9,42.4" fill="#333"/>
<polygon points="776.5,45.6 777.6999999999999,47.1 778.9,45.6" fill="#333"/>
<text x="748.4" y="57.9" font-size="6.8" fill="#a0a0a0" font-weight="normal" text-anchor="start" font-family="Liberation Sans" textLength="14.1" lengthAdjust="spacingAndGlyphs" >Zoom</text>
<text x="744.3" y="66.3" font-size="5.5" fill="#a0a0a0" font-weight="normal" text-anchor="start" font-family="Liberation Sans" >x</text>
<rect x="748.1999999999999" y="59.2" width="24.7" height="10.4" fill="#f0f0f0" stroke="#cfcfcf" stroke-width="0.8" />
<text x="750.1999999999999" y="67.5" font-size="6.8" fill="#a0a0a0" font-weight="normal" text-anchor="start" font-family="Liberation Sans" >1</text>
<rect x="775.3" y="59.5" width="4.8" height="10" fill="#f0f0f0" stroke="#dadada" stroke-width="0.5" />
<polygon points="776.5,63 777.6999999999999,61.5 778.9,63" fill="#333"/>
<polygon points="776.5,66.2 777.6999999999999,67.7 778.9,66.2" fill="#333"/>
<rect x="745.5" y="76.6" width="5.399999999999977" height="5.5" fill="#fff" stroke="#aaa" stroke-width="0.75" />
<text x="753.1" y="82.4" font-size="6.8" fill="#a0a0a0" font-weight="normal" text-anchor="start" font-family="Liberation Sans" textLength="9.3" lengthAdjust="spacingAndGlyphs" >Trig</text>
<rect x="766.3" y="76.6" width="4.800000000000068" height="5.5" fill="#fff" stroke="#aaa" stroke-width="0.75" />
<text x="773.4" y="82.4" font-size="6.8" fill="#a0a0a0" font-weight="normal" text-anchor="start" font-family="Liberation Sans" textLength="8" lengthAdjust="spacingAndGlyphs" >Inv</text>
<rect x="743.4" y="88" width="38.2" height="50.5" fill="none" stroke="#dcdcdc" stroke-width="0.8" />
<rect x="745.9" y="85" width="20" height="5" fill="#f0f0f0" />
<text x="748.4" y="89.9" font-size="6.6" fill="#222" font-weight="normal" text-anchor="start" font-family="Liberation Sans" textLength="16.5" lengthAdjust="spacingAndGlyphs" >Trigger</text>
<text x="752.8" y="97.3" font-size="6.6" fill="#a0a0a0" font-weight="normal" text-anchor="start" font-family="Liberation Sans" textLength="13.6" lengthAdjust="spacingAndGlyphs" >Slope</text>
<circle cx="750.4" cy="103.5" r="3.1" fill="#fff" stroke="#bbb" stroke-width="0.8"/>
<circle cx="750.4" cy="103.5" r="1.55" fill="#bbb"/>
<text x="755.4" y="106" font-size="6.6" fill="#a0a0a0" font-weight="normal" text-anchor="start" font-family="Liberation Sans" textLength="19.5" lengthAdjust="spacingAndGlyphs" >Positive</text>
<circle cx="750.4" cy="111.6" r="3.1" fill="#fff" stroke="#999" stroke-width="0.8"/>
<text x="755.4" y="114.3" font-size="6.6" fill="#a0a0a0" font-weight="normal" text-anchor="start" font-family="Liberation Sans" textLength="22" lengthAdjust="spacingAndGlyphs" >Negative</text>
<text x="748.4" y="121.7" font-size="5.6" fill="#aaa" font-weight="normal" text-anchor="start" font-family="Liberation Sans" textLength="20.5" lengthAdjust="spacingAndGlyphs" >Delta Th %</text>
<rect x="748.1999999999999" y="124.3" width="21.3" height="11" fill="#f0f0f0" stroke="#cfcfcf" stroke-width="0.8" />
<text x="750.0" y="132.6" font-size="6.6" fill="#222" font-weight="normal" text-anchor="start" font-family="Liberation Sans" >25</text>
<rect x="771.0" y="124.6" width="6.4" height="10.6" fill="#f0f0f0" stroke="#cfcfcf" stroke-width="0.5" />
<polygon points="773.0,128.8 774.1999999999999,127.3 775.4,128.8" fill="#222"/>
<polygon points="773.0,131.3 774.1999999999999,132.8 775.4,131.3" fill="#222"/>
<rect x="743.9" y="141.9" width="5.7999999999999545" height="5.300000000000011" fill="#fff" stroke="#888" stroke-width="0.75" />
<text x="752.0" y="147.20000000000002" font-size="6.6" fill="#a0a0a0" font-weight="normal" text-anchor="start" font-family="Liberation Sans" textLength="10.2" lengthAdjust="spacingAndGlyphs" >D/A</text>
<rect x="743.9" y="149.70000000000002" width="5.7999999999999545" height="5.300000000000011" fill="#fff" stroke="#888" stroke-width="0.75" />
<text x="752.0" y="155.00000000000003" font-size="6.6" fill="#a0a0a0" font-weight="normal" text-anchor="start" font-family="Liberation Sans" textLength="27.3" lengthAdjust="spacingAndGlyphs" >DCremoval</text>
<rect x="743.9" y="157.5" width="5.7999999999999545" height="5.300000000000011" fill="#fff" stroke="#888" stroke-width="0.75" />
<text x="752.0" y="162.8" font-size="6.6" fill="#a0a0a0" font-weight="normal" text-anchor="start" font-family="Liberation Sans" textLength="18.7" lengthAdjust="spacingAndGlyphs" >Trig left</text>
<rect x="743.9" y="165.3" width="5.7999999999999545" height="5.300000000000011" fill="#fff" stroke="#888" stroke-width="0.75" />
<text x="752.0" y="170.60000000000002" font-size="6.6" fill="#a0a0a0" font-weight="normal" text-anchor="start" font-family="Liberation Sans" textLength="16.3" lengthAdjust="spacingAndGlyphs" >Values</text>
<rect x="785.5" y="30.2" width="6.4" height="173" fill="#e6e6e6" stroke="#dcdcdc" stroke-width="0.5" />
<text x="789.8" y="210" font-size="6.6" fill="#a0a0a0" font-weight="normal" text-anchor="end" font-family="Liberation Sans" textLength="19.5" lengthAdjust="spacingAndGlyphs" >-inf dB</text>
<rect x="4" y="219" width="659" height="200" fill="#000" />
<line x1="4.5" y1="219" x2="4.5" y2="416" stroke="#8020e0" stroke-width="1" stroke-dasharray="11.5,1.2"/>
<line x1="26.5" y1="219" x2="26.5" y2="419" stroke="#262626" stroke-width="1" />
<line x1="173.5" y1="219" x2="173.5" y2="419" stroke="#262626" stroke-width="1" />
<line x1="259.5" y1="219" x2="259.5" y2="419" stroke="#262626" stroke-width="1" />
<line x1="320.5" y1="219" x2="320.5" y2="419" stroke="#262626" stroke-width="1" />
<line x1="368.5" y1="219" x2="368.5" y2="419" stroke="#262626" stroke-width="1" />
<line x1="407.5" y1="219" x2="407.5" y2="419" stroke="#262626" stroke-width="1" />
<line x1="439.5" y1="219" x2="439.5" y2="419" stroke="#262626" stroke-width="1" />
<line x1="468.5" y1="219" x2="468.5" y2="419" stroke="#262626" stroke-width="1" />
<line x1="493.5" y1="219" x2="493.5" y2="419" stroke="#262626" stroke-width="1" />
<line x1="515.5" y1="219" x2="515.5" y2="419" stroke="#262626" stroke-width="1" />
<line x1="4" y1="235.5" x2="663" y2="235.5" stroke="#383838" stroke-width="1" />
<line x1="4" y1="269.5" x2="663" y2="269.5" stroke="#383838" stroke-width="1" />
<line x1="4" y1="303.5" x2="663" y2="303.5" stroke="#383838" stroke-width="1" />
<line x1="4" y1="337.5" x2="663" y2="337.5" stroke="#383838" stroke-width="1" />
<line x1="4" y1="372.5" x2="663" y2="372.5" stroke="#383838" stroke-width="1" />
<line x1="4" y1="406.5" x2="663" y2="406.5" stroke="#383838" stroke-width="1" />
<text x="8.75" y="229.3" font-size="7.5" fill="#00c800" font-weight="normal" text-anchor="start" font-family="Liberation Sans" textLength="66.5" lengthAdjust="spacingAndGlyphs" >THD 0.0010% (1007.81Hz)</text>
<text x="650" y="229.5" font-size="7.3" fill="#00b0b0" font-weight="normal" text-anchor="end" font-family="Liberation Sans" textLength="20.5" lengthAdjust="spacingAndGlyphs" >0.00000</text>
<polyline points="51.51,222.4 53.71,229.7 55.89,237.0 58.05,243.7 60.18,249.9 62.30,256.1 64.39,262.2 66.46,267.6 68.51,272.7 70.54,277.7 72.56,282.7 74.55,286.9 76.53,290.3 78.48,293.8 80.42,297.2 82.35,300.5 84.25,303.1 86.14,305.7 88.01,308.4 89.86,311.2 91.70,313.2 93.53,315.3 95.33,318.4 97.13,321.2 98.90,324.0 100.66,324.5 102.41,326.6 104.15,330.9 105.87,333.0 107.57,336.6 109.26,338.1 110.94,338.7 112.61,340.5 114.26,347.1 115.90,344.5 117.53,345.6 119.14,346.9 120.75,351.2 122.34,353.2 123.92,354.2 125.48,356.1 127.04,358.2 128.58,360.4 130.12,362.6 131.64,361.9 133.15,358.8 134.65,365.6 136.14,362.2 137.62,366.2 139.09,364.6 140.55,369.0 142.00,368.2 143.44,371.3 144.87,379.0 146.29,372.6 147.70,375.4 149.10,371.6 150.50,374.7 151.88,377.7 153.26,376.9 154.62,378.8 155.98,379.1 157.33,377.4 158.67,381.4 160.00,379.0 161.32,385.4 162.64,380.8 163.94,383.9 165.24,383.0 166.53,385.6 167.82,382.8 169.09,386.8 170.36,384.8 171.62,388.3 171.70,385.0 172.70,381.0 173.40,356.0 174.00,329.0 174.60,331.0 175.20,359.0 176.00,393.0 176.90,387.0 177.81,387.9 179.03,389.5 180.24,387.3 181.44,391.8 182.64,392.0 183.83,394.0 185.01,388.1 186.19,391.5 187.36,385.8 188.52,389.4 189.68,386.5 190.83,389.2 191.97,392.8 193.11,383.9 194.25,386.4 195.37,389.0 196.49,390.8 197.61,391.9 198.72,386.4 199.82,389.3 200.92,393.5 202.01,391.1 203.10,393.1 204.18,387.2 205.25,382.4 206.32,390.7 207.39,389.7 208.45,395.3 209.50,383.9 210.55,389.5 211.59,396.9 212.63,384.4 213.66,389.5 214.69,388.5 215.72,382.8 216.73,386.4 217.75,392.5 218.76,391.5 219.76,386.1 220.76,392.6 221.76,391.0 222.75,388.6 223.73,385.2 224.71,392.9 225.69,389.7 226.66,389.9 227.63,384.7 228.59,392.1 229.55,394.6 230.50,388.0 231.45,387.3 232.40,386.1 233.34,391.6 234.28,391.7 235.21,385.2 236.14,388.7 237.07,391.0 237.99,393.4 238.91,381.9 239.82,393.5 240.73,395.0 241.64,388.4 242.54,389.2 243.43,386.8 244.33,386.7 245.22,388.2 246.11,381.3 246.99,390.0 247.87,391.1 248.74,389.1 249.62,386.0 250.49,388.7 251.35,387.5 252.21,383.5 253.07,386.5 253.92,390.4 254.78,393.7 255.62,395.9 256.47,384.2 257.31,394.1 258.00,385.2 259.00,381.2 259.70,343.3 260.30,305.7 260.90,307.7 261.50,347.5 262.30,393.2 263.20,387.2 263.92,391.1 264.73,390.4 265.54,383.6 266.35,388.5 267.15,391.0 267.95,388.2 268.75,390.5 269.54,393.0 270.33,386.4 271.12,389.1 271.90,392.9 272.69,391.0 273.47,387.9 274.24,389.8 275.02,388.7 275.79,391.3 276.56,391.5 277.32,389.8 278.08,388.5 278.84,388.6 279.60,390.8 280.35,393.2 281.11,390.7 281.86,391.4 282.60,385.1 283.35,385.8 284.09,388.6 284.83,392.1 285.56,391.2 286.30,391.4 287.03,385.0 287.76,397.5 288.48,387.0 289.20,383.6 289.93,385.1 290.64,397.0 291.36,385.9 292.07,389.5 292.79,396.9 293.50,389.4 294.20,390.1 294.91,387.2 295.61,394.7 296.31,390.3 297.01,388.3 297.70,383.5 298.39,388.2 299.08,384.1 299.77,395.6 300.46,389.4 301.14,391.3 301.82,387.1 302.50,390.4 303.18,386.9 303.86,393.0 304.53,390.3 305.20,388.7 305.87,387.7 306.54,394.6 307.20,397.8 307.86,390.0 308.52,387.8 309.18,392.1 309.84,391.6 310.49,381.0 311.15,386.0 311.80,390.3 312.45,389.3 313.09,386.0 313.74,390.4 314.38,387.9 315.02,388.6 315.66,384.4 316.29,387.8 316.93,385.2 317.56,394.6 318.19,396.5 318.40,388.4 318.82,393.4 319.45,383.1 319.80,385.4 320.60,377.5 321.00,372.0 321.40,377.5 322.20,393.4 322.56,390.2 323.18,387.6 323.60,389.4 323.79,388.9 324.40,390.3 325.02,388.2 325.62,388.9 326.23,392.5 326.84,390.6 327.44,388.5 328.04,391.6 328.65,390.8 329.24,389.4 329.84,390.3 330.44,388.1 331.03,393.2 331.62,392.1 332.21,391.4 332.80,388.5 333.39,391.8 333.98,388.9 334.56,394.3 335.14,396.0 335.73,394.4 336.30,389.7 336.88,388.3 337.46,393.1 338.03,392.1 338.61,387.6 339.18,394.8 339.75,397.4 340.32,387.1 340.88,389.5 341.45,393.8 342.01,388.8 342.58,393.1 343.14,392.0 343.70,387.1 344.26,392.8 344.81,389.1 345.37,395.4 345.92,389.9 346.47,392.1 347.02,391.6 347.57,394.2 348.12,395.1 348.67,385.6 349.21,390.2 349.76,387.0 350.30,391.2 350.84,393.2 351.38,386.8 351.92,395.5 352.46,389.8 352.99,389.5 353.53,391.9 354.06,392.0 354.59,394.3 355.12,394.6 355.65,394.2 356.18,385.0 356.70,387.6 357.23,391.6 357.75,396.3 358.27,393.7 358.80,396.0 359.32,390.7 359.83,397.9 360.35,388.9 360.87,391.5 361.38,387.4 361.90,390.6 362.41,394.9 362.92,391.5 363.43,392.3 363.94,392.9 364.45,384.6 364.95,383.5 365.46,397.3 365.96,391.4 366.40,389.4 366.46,391.0 366.96,389.9 367.47,393.1 367.80,386.4 368.60,350.5 369.00,333.0 369.40,350.5 370.20,394.4 370.44,388.3 370.93,395.3 371.43,385.8 371.60,390.4 371.92,387.3 372.40,391.0 372.89,391.6 373.38,390.7 373.86,394.5 374.35,390.2 374.83,389.3 375.31,386.7 375.79,389.5 376.27,395.6 376.75,394.3 377.23,390.4 377.71,390.8 378.18,398.2 378.66,394.8 379.13,393.0 379.60,380.2 380.08,397.4 380.55,383.2 381.01,390.7 381.48,390.4 381.95,390.2 382.42,390.4 382.88,389.8 383.35,391.7 383.81,392.8 384.27,389.8 384.73,391.8 385.19,396.0 385.65,390.1 386.11,392.1 386.57,387.8 387.02,390.2 387.48,390.4 387.93,390.8 388.39,386.2 388.84,394.1 389.29,399.6 389.74,391.2 390.19,393.7 390.64,394.8 391.09,388.6 391.53,394.6 391.98,389.5 392.42,396.0 392.87,388.8 393.31,389.7 393.75,391.9 394.19,388.1 394.63,388.0 395.07,393.6 395.51,394.3 395.95,390.3 396.38,387.4 396.82,388.8 397.25,388.2 397.69,393.2 398.12,392.2 398.55,394.8 398.99,396.8 399.42,391.0 399.84,391.9 400.27,387.7 400.70,376.9 401.13,390.1 401.55,396.9 401.98,388.3 402.40,399.0 402.83,393.4 403.25,389.8 403.67,392.5 404.09,393.7 404.51,389.4 404.93,393.5 405.35,396.6 405.77,391.7 406.18,389.3 406.60,389.5 407.02,384.7 407.43,391.6 407.84,390.0 408.26,388.7 408.67,395.7 409.08,396.6 409.49,390.0 409.90,388.4 410.31,393.7 410.72,392.2 411.12,398.3 411.53,391.5 411.94,403.2 412.34,392.3 412.74,388.9 413.15,390.3 413.55,389.8 413.95,395.2 414.35,388.1 414.75,394.6 415.15,396.3 415.55,392.9 415.95,389.9 416.35,396.7 416.74,393.3 417.14,392.7 417.54,392.9 417.93,392.8 418.32,391.1 418.72,392.5 419.11,394.3 419.50,389.8 419.89,392.0 420.28,392.3 420.67,394.4 421.06,389.7 421.45,394.1 421.83,393.1 422.22,388.0 422.61,393.9 422.99,391.3 423.38,403.5 423.76,394.9 424.14,390.1 424.52,391.7 424.91,397.1 425.29,392.0 425.67,389.6 426.05,396.9 426.43,387.4 426.80,396.6 427.18,394.3 427.56,396.5 427.93,391.2 428.31,396.0 428.69,391.6 429.06,398.6 429.43,392.3 429.81,396.0 430.18,397.1 430.55,399.2 430.92,395.6 431.29,393.0 431.66,393.2 432.03,388.6 432.40,386.3 432.77,396.4 433.13,392.0 433.50,390.1 433.87,391.7 434.23,398.0 434.59,391.9 434.96,381.5 435.32,396.1 435.68,384.1 436.05,390.8 436.41,388.0 436.77,395.8 437.13,394.7 437.49,390.0 437.85,392.8 437.90,390.8 438.21,391.5 438.56,390.6 438.92,388.2 439.30,387.8 440.10,359.7 440.50,345.5 440.90,359.7 441.70,395.8 442.11,389.1 442.46,390.5 442.81,394.2 443.10,391.8 443.16,394.7 443.51,393.3 443.86,394.2 444.21,402.0 444.56,390.9 444.90,394.5 445.25,386.9 445.60,390.5 445.94,390.8 446.29,397.9 446.63,395.5 446.98,397.0 447.32,392.9 447.66,388.7 448.00,391.2 448.35,392.8 448.69,395.8 449.03,395.4 449.37,393.8 449.71,392.2 450.05,392.4 450.39,390.5 450.72,396.6 451.06,387.6 451.40,396.1 451.73,387.6 452.07,393.3 452.40,393.6 452.74,391.7 453.07,389.8 453.41,398.3 453.74,394.8 454.07,402.1 454.40,393.1 454.74,390.9 455.07,398.9 455.40,394.1 455.73,383.5 456.06,394.5 456.39,394.9 456.72,381.2 457.04,395.3 457.37,393.8 457.70,397.2 458.02,395.6 458.35,391.4 458.68,395.3 459.00,399.9 459.32,397.4 459.65,394.9 459.97,400.7 460.30,385.0 460.62,395.4 460.94,393.7 461.26,383.9 461.58,383.5 461.90,394.9 462.22,387.9 462.54,395.0 462.86,393.3 463.18,394.1 463.50,393.0 463.82,390.0 464.13,388.2 464.45,396.0 464.77,391.8 465.08,393.3 465.40,389.1 465.71,377.8 466.03,396.5 466.34,395.8 466.65,392.9 466.97,397.2 467.28,393.3 467.59,394.8 467.90,396.1 468.21,387.0 468.53,401.8 468.84,394.8 469.15,398.3 469.45,392.1 469.76,392.9 470.07,390.7 470.38,395.3 470.69,398.5 470.99,394.7 471.30,396.0 471.61,396.9 471.91,397.3 472.22,393.5 472.52,394.4 472.83,400.4 473.13,382.7 473.44,393.0 473.74,395.1 474.04,390.2 474.34,393.0 474.65,392.7 474.95,395.9 475.25,387.3 475.55,401.8 475.85,396.6 476.15,395.5 476.45,395.4 476.75,403.2 477.05,398.4 477.34,401.6 477.64,398.8 477.94,393.1 478.24,398.6 478.53,392.1 478.83,394.3 479.12,397.7 479.42,404.7 479.71,392.3 480.01,395.1 480.30,390.0 480.60,395.1 480.89,391.5 481.18,392.7 481.47,386.2 481.77,396.3 482.06,397.4 482.35,395.5 482.64,392.3 482.93,389.2 483.22,394.1 483.51,397.8 483.80,392.6 484.09,393.7 484.37,393.3 484.66,396.8 484.95,390.9 485.24,394.8 485.52,403.6 485.81,392.4 486.10,390.5 486.38,382.6 486.67,396.3 486.95,404.6 487.24,394.1 487.52,392.8 487.80,394.1 488.09,400.6 488.37,401.2 488.65,383.6 488.94,392.6 489.22,393.9 489.50,392.6 489.78,393.5 490.06,385.8 490.34,397.9 490.62,395.3 490.90,393.0 491.18,390.3 491.46,402.0 491.74,396.7 491.90,392.5 492.02,393.9 492.29,391.5 492.57,390.2 492.85,394.3 493.12,396.1 493.30,389.5 494.10,364.4 494.50,351.5 494.90,364.4 495.70,397.5 495.87,404.6 496.14,394.9 496.42,394.4 496.69,392.5 496.96,396.7 497.10,393.5 497.23,382.7 497.50,394.0 497.77,388.4 498.04,397.7 498.31,401.2 498.58,393.9 498.85,393.9 499.12,393.7 499.39,374.6 499.66,400.9 499.93,390.0 500.20,397.2 500.46,389.2 500.73,396.8 501.00,392.3 501.26,399.8 501.53,393.1 501.79,394.2 502.06,396.8 502.32,393.6 502.59,384.0 502.85,391.9 503.12,389.4 503.38,395.0 503.64,397.1 503.91,398.8 504.17,391.2 504.43,392.5 504.69,391.3 504.96,392.8 505.22,394.4 505.48,378.3 505.74,394.1 506.00,391.2 506.26,391.0 506.52,396.0 506.78,395.4 507.04,394.1 507.30,399.9 507.56,401.9 507.81,395.4 508.07,397.2 508.33,388.4 508.59,391.2 508.84,394.4 509.10,392.1 509.36,399.3 509.61,395.5 509.87,392.2 510.12,395.2 510.38,398.7 510.63,400.9 510.89,390.0 511.14,393.9 511.40,398.1 511.65,393.7 511.90,393.9 512.16,386.7 512.41,396.7 512.66,394.5 512.91,398.7 513.16,397.8 513.42,407.3 513.67,397.0 513.92,398.9 514.17,390.3 514.42,391.9 514.67,394.6 514.92,393.7 515.17,395.3 515.42,397.1 515.67,397.4 515.91,402.7 516.16,377.9 516.41,393.3 516.66,390.8 516.91,396.1 517.15,399.2 517.40,397.8 517.65,390.5 517.89,396.5 518.14,395.2 518.38,372.6 518.63,398.0 518.87,392.6 519.12,399.8 519.36,396.9 519.61,397.5 519.85,393.8 520.10,393.1 520.34,395.6 520.58,398.3 520.82,394.0 521.07,395.0 521.31,398.7 521.55,395.1 521.79,399.4 522.03,400.0 522.28,394.3 522.52,406.9 522.76,394.5 523.00,396.3 523.24,403.3 523.48,393.4 523.72,397.6 523.96,394.7 524.20,399.1 524.43,394.2 524.67,397.5 524.91,396.4 525.15,398.5 525.39,398.5 525.62,396.8 525.86,395.0 526.10,399.2 526.34,393.6 526.57,398.0 526.81,386.5 527.04,407.2 527.28,403.4 527.51,396.7 527.75,388.6 527.98,390.5 528.22,384.9 528.45,395.3 528.69,400.4 528.92,391.1 529.15,401.3 529.39,391.8 529.62,402.3 529.85,397.8 530.09,399.2 530.32,396.1 530.55,400.3 530.78,394.4 531.01,392.7 531.24,395.5 531.48,395.8 531.71,394.2 531.94,396.0 532.17,395.0 532.40,399.4 532.63,396.5 532.86,393.2 533.08,399.6 533.31,394.4 533.54,394.5 533.77,397.7 533.90,393.8 534.00,400.4 534.23,393.1 534.46,398.6 534.68,408.6 534.91,392.4 535.14,401.0 535.30,390.8 536.10,366.6 536.50,354.0 536.90,366.6 537.70,398.8 537.84,391.9 538.07,392.6 538.29,388.2 538.51,400.6 538.74,394.5 538.96,368.9 539.10,394.8 539.18,395.4 539.40,395.9 539.63,398.3 539.85,399.1 540.07,397.0 540.29,393.8 540.51,397.4 540.73,393.6 540.96,390.5 541.18,396.0 541.40,400.4 541.62,397.9 541.84,396.7 542.06,393.5 542.28,401.4 542.50,399.2 542.71,392.9 542.93,394.8 543.15,392.5 543.37,391.9 543.59,379.3 543.81,394.2 544.02,397.4 544.24,402.7 544.46,394.1 544.68,398.3 544.89,398.2 545.11,390.2 545.33,400.5 545.54,393.6 545.76,398.9 545.97,394.2 546.19,401.8 546.40,390.8 546.62,401.4 546.83,396.0 547.05,393.3 547.26,391.5 547.48,398.2 547.69,380.0 547.90,400.8 548.12,396.9 548.33,399.7 548.54,390.6 548.76,393.0 548.97,396.7 549.18,390.5 549.40,386.3 549.61,393.4 549.82,398.9 550.03,395.4 550.24,391.1 550.45,391.0 550.66,399.2 550.88,400.1 551.09,399.4 551.30,395.4 551.51,393.9 551.72,390.2 551.93,399.7 552.14,396.9 552.34,398.8 552.55,395.3 552.76,396.2 552.97,371.6 553.18,397.7 553.39,401.7 553.60,393.4 553.80,396.9 554.01,398.9 554.22,396.2 554.43,394.4 554.63,399.6 554.84,398.0 555.05,399.3 555.25,396.9 555.46,380.5 555.67,398.8 555.87,381.0 556.08,392.8 556.28,392.4 556.49,393.8 556.69,391.8 556.90,394.5 557.10,405.0 557.31,394.2 557.51,395.0 557.72,393.8 557.92,403.3 558.12,392.9 558.33,396.5 558.53,390.5 558.73,393.5 558.94,394.5 559.14,394.6 559.34,394.5 559.54,391.2 559.75,404.4 559.95,396.2 560.15,392.6 560.35,395.5 560.55,399.2 560.75,401.7 560.96,389.0 561.16,393.5 561.36,398.5 561.56,400.1 561.76,393.6 561.96,387.0 562.16,397.0 562.36,398.0 562.56,400.7 562.76,399.7 562.96,397.6 563.15,402.0 563.35,388.0 563.55,398.2 563.75,393.5 563.95,393.1 564.15,397.9 564.34,394.4 564.54,396.9 564.74,391.5 564.94,395.1 565.13,403.3 565.33,392.7 565.53,400.5 565.72,370.1 565.92,396.6 566.12,390.3 566.31,392.6 566.51,394.5 566.70,377.9 566.90,390.2 567.09,398.2 567.29,403.1 567.48,394.3 567.68,373.2 567.87,402.6 568.07,396.4 568.26,399.1 568.46,399.0 568.65,400.7 568.84,376.3 568.90,395.0 569.04,408.8 569.23,393.9 569.42,395.1 569.62,396.1 569.81,383.4 570.00,397.0 570.19,390.8 570.30,392.0 571.10,373.9 571.50,364.0 571.90,373.9 572.70,400.0 572.87,395.9 573.06,396.2 573.25,396.1 573.44,402.1 573.63,390.6 573.82,396.9 574.01,393.2 574.10,396.0 574.20,405.0 574.39,401.7 574.57,392.4 574.76,401.6 574.95,399.5 575.14,392.4 575.33,401.6 575.51,380.8 575.70,391.9 575.89,393.2 576.08,400.5 576.26,394.2 576.45,395.8 576.64,388.6 576.82,393.8 577.01,394.7 577.20,392.8 577.38,387.5 577.57,398.4 577.75,393.9 577.94,375.7 578.12,408.1 578.31,399.4 578.49,400.2 578.68,401.6 578.86,402.6 579.05,402.1 579.23,402.8 579.42,368.2 579.60,398.8 579.79,398.0 579.97,397.9 580.15,397.6 580.34,398.3 580.52,374.3 580.70,402.2 580.89,396.1 581.07,389.8 581.25,389.1 581.43,394.9 581.62,400.2 581.80,402.4 581.98,396.8 582.16,393.5 582.34,392.3 582.53,397.5 582.71,395.9 582.89,396.2 583.07,391.8 583.25,392.9 583.43,394.6 583.61,399.2 583.79,399.0 583.97,392.4 584.15,396.8 584.33,398.9 584.51,398.9 584.69,389.1 584.87,398.5 585.05,404.5 585.23,402.8 585.41,398.7 585.59,376.7 585.77,385.1 585.95,397.1 586.13,398.3 586.30,403.7 586.48,394.2 586.66,383.0 586.84,396.9 587.02,404.5 587.19,392.2 587.37,396.5 587.55,395.7 587.73,395.8 587.90,386.1 588.08,402.3 588.26,405.0 588.43,396.4 588.61,410.8 588.79,393.7 588.96,401.6 589.14,393.9 589.31,399.8 589.49,399.1 589.66,408.7 589.84,399.3 590.02,394.7 590.19,397.9 590.37,391.2 590.54,398.5 590.72,405.1 590.89,397.9 591.06,402.7 591.24,394.3 591.41,398.3 591.59,383.4 591.76,391.1 591.93,392.9 592.11,395.3 592.28,392.0 592.45,402.7 592.63,398.4 592.80,403.3 592.97,398.4 593.15,392.0 593.32,398.4 593.49,395.1 593.66,399.7 593.84,396.9 594.01,396.5 594.18,401.3 594.35,390.2 594.52,394.6 594.69,383.0 594.87,394.1 595.04,398.8 595.21,398.2 595.38,397.6 595.55,398.4 595.72,397.6 595.89,405.8 596.06,404.9 596.23,403.3 596.40,398.8 596.57,393.5 596.74,399.6 596.91,391.4 597.08,393.3 597.25,396.9 597.42,397.9 597.59,378.6 597.76,399.8 597.93,397.2 598.10,402.9 598.26,394.9 598.43,378.8 598.60,370.6 598.77,401.8 598.94,398.7 599.11,400.6 599.27,400.6 599.44,394.6 599.61,400.0 599.78,403.4 599.94,394.3 600.11,395.4 600.28,389.9 600.44,387.9 600.61,391.3 600.78,397.8 600.94,399.6 601.11,397.8 601.28,392.0 601.44,395.7 601.61,402.4 601.77,406.3 601.94,395.9 602.11,396.7 602.27,397.4 602.44,403.3 602.60,400.1 602.77,395.7 602.93,393.4 603.10,402.6 603.26,394.7 603.43,402.6 603.59,394.0 603.75,398.7 603.92,410.8 604.08,393.7 604.25,394.5 604.41,397.5 604.57,397.1 604.74,401.3 604.90,397.5 605.06,393.6 605.23,370.5 605.39,402.8 605.55,397.7 605.72,389.8 605.88,396.0 606.04,386.6 606.20,403.4 606.37,392.6 606.53,401.1 606.69,398.2 606.85,398.7 607.01,395.4 607.18,397.8 607.34,400.6 607.50,392.7 607.66,399.9 607.82,398.8 607.98,400.7 608.14,402.0 608.30,395.4 608.47,379.3 608.63,398.8 608.79,401.1 608.95,405.5 609.11,397.8 609.27,372.2 609.43,397.6 609.59,381.0 609.75,398.3 609.91,388.0 610.07,399.2 610.22,397.3 610.38,392.9 610.54,395.5 610.70,397.8 610.86,371.6 611.02,400.0 611.18,382.8 611.34,399.1 611.50,405.5 611.65,400.8 611.81,401.2 611.97,392.8 612.13,399.1 612.29,397.5 612.44,398.0 612.60,395.7 612.76,397.3 612.92,387.6 613.07,388.9 613.23,396.1 613.39,397.5 613.54,397.1 613.70,397.9 613.86,412.2 614.01,393.0 614.17,397.1 614.33,395.6 614.48,398.7 614.64,400.1 614.80,399.0 614.95,400.5 615.11,403.0 615.26,403.9 615.42,401.6 615.57,399.7 615.73,399.9 615.88,400.4 616.04,377.6 616.19,399.9 616.35,394.7 616.50,378.3 616.66,401.6 616.81,392.1 616.97,401.4 617.12,378.9 617.28,403.3 617.43,397.3 617.58,398.0 617.74,398.1 617.89,370.3 618.04,396.9 618.20,399.6 618.35,396.8 618.51,399.4 618.66,400.1 618.81,400.9 618.96,400.8 619.12,399.3 619.27,398.5 619.42,399.6 619.58,377.0 619.73,406.6 619.88,398.7 620.03,403.4 620.18,397.1 620.34,404.3 620.49,393.7 620.64,405.8 620.79,399.4 620.94,378.2 621.09,398.7 621.25,395.8 621.40,403.4 621.55,398.1 621.70,395.3 621.85,401.8 622.00,398.8 622.15,399.5 622.30,393.9 622.45,398.1 622.60,398.8 622.75,400.5 622.90,394.9 623.05,396.8 623.20,399.1 623.35,386.0 623.50,395.7 623.65,395.0 623.80,393.5 623.95,399.9 624.10,395.4 624.25,395.8 624.40,398.2 624.55,393.2 624.70,403.6 624.85,381.6 624.99,394.2 625.14,394.7 625.29,393.8 625.44,397.2 625.59,390.4 625.74,402.8 625.88,402.5 626.03,405.1 626.18,410.2 626.33,398.8 626.47,396.3 626.62,395.8 626.77,402.1 626.92,401.7 627.06,394.9 627.21,406.6 627.36,403.7 627.51,400.3 627.65,395.5 627.80,400.2 627.95,400.6 628.09,392.8 628.24,398.7 628.38,404.4 628.53,398.2 628.68,405.9 628.82,394.6 628.97,376.1 629.11,392.2 629.26,401.3 629.41,400.1 629.55,399.0 629.70,401.8 629.84,395.2 629.99,397.2 630.13,399.1 630.28,399.9 630.42,396.3 630.57,393.6 630.71,398.8 630.86,402.1 631.00,398.9 631.15,398.5 631.29,401.5 631.43,398.5 631.58,404.9 631.72,396.2 631.87,396.3 632.01,392.2 632.15,405.1 632.30,397.2 632.44,407.2 632.58,399.5 632.73,395.0 632.87,397.8 633.01,396.2 633.16,403.0 633.30,399.2 633.44,396.9 633.59,400.5 633.73,385.1 633.87,394.7 634.01,393.4 634.16,399.8 634.30,399.6 634.44,408.0 634.58,398.5 634.72,398.2 634.87,399.4 635.01,396.5 635.15,399.6 635.29,400.3 635.43,396.1 635.57,395.7 635.72,406.6 635.86,392.1 636.00,399.1 636.14,400.7 636.28,396.2 636.42,396.8 636.56,397.9 636.70,401.9 636.84,399.8 636.98,392.8 637.12,397.4 637.26,396.7 637.40,398.8 637.54,399.5 637.68,406.9 637.82,370.4 637.96,396.7 638.10,407.1 638.24,397.6 638.38,399.1 638.52,398.2 638.66,397.5 638.80,398.4 638.94,395.7 639.08,400.5 639.22,401.8 639.36,407.3 639.50,401.7 639.64,401.9 639.77,395.7 639.91,397.5 640.05,382.7 640.19,393.1 640.33,403.6 640.47,395.4 640.60,404.8 640.74,399.0 640.88,397.3 641.02,379.7 641.16,402.3 641.29,406.4 641.43,398.1 641.57,383.3 641.71,410.3 641.84,402.6 641.98,401.0 642.12,398.0 642.26,397.1 642.39,398.9 642.53,402.3 642.67,384.1 642.80,392.0 642.94,390.7 643.08,398.0 643.21,400.0 643.35,399.9 643.48,399.2 643.62,398.0 643.76,404.0 643.89,399.2 644.03,402.3 644.16,377.1 644.30,403.8 644.44,399.4 644.57,397.0 644.71,396.5 644.84,399.7 644.98,395.4 645.11,394.4 645.25,399.6 645.38,403.5 645.52,397.8 645.65,395.1 645.79,402.2 645.92,386.3 646.06,401.3 646.19,404.2 646.33,399.3 646.46,380.5 646.59,403.0 646.73,402.1 646.86,396.3 647.00,396.4 647.13,396.8 647.27,383.1 647.40,395.4 647.53,401.6 647.67,398.8 647.80,382.1 647.93,401.5 648.07,396.1 648.20,401.3 648.33,379.2 648.47,396.5 648.60,399.4 648.73,397.4 648.86,390.9 649.00,403.8 649.13,399.7 649.26,401.0 649.40,399.6 649.53,404.0 649.66,399.0 649.79,393.7 649.92,383.1 650.06,397.1 650.19,390.0 650.32,399.4 650.45,392.5 650.58,395.2 650.72,404.3 650.85,400.4 650.98,399.7 651.11,397.5 651.24,395.9 651.37,382.6 651.50,392.6 651.64,394.4 651.77,399.8 651.90,382.9 652.03,398.3 652.16,399.3 652.29,401.9 652.42,403.0 652.55,397.5 652.68,398.0 652.81,401.0 652.94,395.6 653.07,399.2 653.20,386.2 653.33,405.3 653.46,396.7 653.59,414.0 653.72,404.2 653.85,376.5 653.98,378.2 654.11,393.2 654.24,398.4 654.37,398.2 654.50,399.4 654.63,397.8 654.76,398.9 654.89,400.8 655.02,375.1 655.15,395.9 655.28,397.1 655.40,397.8 655.40,396.5 655.53,403.2 655.66,404.2 655.79,382.4 655.92,402.5 656.05,403.0 656.18,399.4 656.30,398.7 656.43,398.7 656.56,398.7 656.69,391.2 656.80,394.8 657.60,374.8 658.00,364.0 658.40,374.8 659.20,402.8 659.36,397.6 659.49,399.2 659.61,402.0 659.74,402.3 659.86,399.9 659.99,404.0 660.12,403.4 660.24,396.8 660.37,397.2 660.49,401.9 660.60,398.8 660.62,386.5 660.75,403.2 660.87,392.7 661.00,393.6 661.12,396.1 661.25,395.5 661.37,396.1 661.50,401.5 661.62,399.7 661.75,399.7 661.87,401.5 662.00,400.9 662.12,401.2 662.25,403.3 662.37,376.4 662.50,399.7 662.62,391.0 662.75,401.9 662.87,399.4 662.99,399.4" fill="none" stroke="url(#spg)" stroke-width="0.9"/>
<rect x="663" y="219" width="22" height="200" fill="#a8ccf0" />
<text x="683.2" y="224" font-size="5.8" fill="#0000ff" font-weight="bold" text-anchor="end" font-family="Liberation Sans" textLength="9" lengthAdjust="spacingAndGlyphs" >dBr</text>
<text x="664.6" y="237" font-size="4.8" fill="#222" font-weight="normal" text-anchor="start" font-family="Liberation Sans" textLength="10" lengthAdjust="spacingAndGlyphs" >-80.0</text>
<text x="664.6" y="271" font-size="4.8" fill="#222" font-weight="normal" text-anchor="start" font-family="Liberation Sans" textLength="10" lengthAdjust="spacingAndGlyphs" >-90.0</text>
<text x="664.6" y="306" font-size="4.8" fill="#222" font-weight="normal" text-anchor="start" font-family="Liberation Sans" textLength="11.5" lengthAdjust="spacingAndGlyphs" >-100.0</text>
<text x="664.6" y="340" font-size="4.8" fill="#222" font-weight="normal" text-anchor="start" font-family="Liberation Sans" textLength="11.5" lengthAdjust="spacingAndGlyphs" >-110.0</text>
<text x="664.6" y="374" font-size="4.8" fill="#222" font-weight="normal" text-anchor="start" font-family="Liberation Sans" textLength="11.5" lengthAdjust="spacingAndGlyphs" >-120.0</text>
<text x="664.6" y="408" font-size="4.8" fill="#222" font-weight="normal" text-anchor="start" font-family="Liberation Sans" textLength="11.5" lengthAdjust="spacingAndGlyphs" >-130.0</text>
<rect x="4" y="419" width="681" height="9" fill="#838383" />
<text x="26.5" y="425.5" font-size="6.2" fill="#000" font-weight="bold" text-anchor="middle" font-family="Liberation Sans" >1k</text>
<text x="173.7036678796868" y="425.5" font-size="6.2" fill="#222" font-weight="normal" text-anchor="middle" font-family="Liberation Sans" >2k</text>
<text x="259.8122935579149" y="425.5" font-size="6.2" fill="#222" font-weight="normal" text-anchor="middle" font-family="Liberation Sans" >3k</text>
<text x="320.9073357593736" y="425.5" font-size="6.2" fill="#222" font-weight="normal" text-anchor="middle" font-family="Liberation Sans" >4k</text>
<text x="368.2963321203132" y="425.5" font-size="6.2" fill="#222" font-weight="normal" text-anchor="middle" font-family="Liberation Sans" >5k</text>
<text x="407.01596143760173" y="425.5" font-size="6.2" fill="#222" font-weight="normal" text-anchor="middle" font-family="Liberation Sans" >6k</text>
<text x="439.7529415669716" y="425.5" font-size="6.2" fill="#222" font-weight="normal" text-anchor="middle" font-family="Liberation Sans" >7k</text>
<text x="468.1110036390604" y="425.5" font-size="6.2" fill="#222" font-weight="normal" text-anchor="middle" font-family="Liberation Sans" >8k</text>
<text x="515.5" y="425.5" font-size="6.2" fill="#000" font-weight="bold" text-anchor="middle" font-family="Liberation Sans" >10k</text>
<clipPath id="hzc"><rect x="660" y="419" width="25" height="9"/></clipPath>
<text x="677" y="425.6" font-size="7" fill="#0000ff" font-weight="bold" text-anchor="start" font-family="Liberation Sans" clip-path="url(#hzc)">Hz</text>
<rect x="0" y="428.7" width="800" height="1.3" fill="#505848" />
<rect x="0" y="427.6" width="800" height="1.1" fill="#e8e8e8" />
<rect x="685.2" y="219" width="3" height="200" fill="#f0f0f0" />
<rect x="688.7" y="219.5" width="20.799999999999955" height="9" fill="#f0f0f0" stroke="#dcdcdc" stroke-width="0.7" />
<text x="699.1" y="225.7" font-size="6.6" fill="#222" font-weight="normal" text-anchor="middle" font-family="Liberation Sans" textLength="12" lengthAdjust="spacingAndGlyphs" >Main</text>
<rect x="710.5" y="219.5" width="20.700000000000045" height="9" fill="#f0f0f0" stroke="#dcdcdc" stroke-width="0.7" />
<text x="720.85" y="225.7" font-size="6.6" fill="#222" font-weight="normal" text-anchor="middle" font-family="Liberation Sans" textLength="12.5" lengthAdjust="spacingAndGlyphs" >More</text>
<rect x="732.2" y="219.5" width="21.5" height="9" fill="#f0f0f0" stroke="#dcdcdc" stroke-width="0.7" />
<text x="742.95" y="225.7" font-size="6.6" fill="#222" font-weight="normal" text-anchor="middle" font-family="Liberation Sans" textLength="13.5" lengthAdjust="spacingAndGlyphs" >Cepst</text>
<rect x="776.8" y="219.5" width="19.200000000000045" height="9" fill="#f0f0f0" stroke="#dcdcdc" stroke-width="0.7" />
<text x="785.4" y="225.7" font-size="6.6" fill="#222" font-weight="normal" text-anchor="middle" font-family="Liberation Sans" textLength="10" lengthAdjust="spacingAndGlyphs" >IMD</text>
<rect x="688" y="228" width="111" height="164.3" fill="#ffffff" stroke="#dcdcdc" stroke-width="0.7" />
<rect x="754.2" y="218" width="21.8" height="11" fill="#ffffff" stroke="#dcdcdc" stroke-width="0.7" />
<rect x="754.7" y="227" width="20.8" height="2.5" fill="#ffffff" />
<text x="765" y="224.6" font-size="6.6" fill="#222" font-weight="normal" text-anchor="middle" font-family="Liberation Sans" textLength="10.5" lengthAdjust="spacingAndGlyphs" >THD</text>
<rect x="691.5" y="235.5" width="32.5" height="25.5" fill="none" stroke="#dcdcdc" stroke-width="0.7" />
<rect x="694" y="232" width="20" height="5" fill="#ffffff" />
<text x="695.5" y="238.5" font-size="6.6" fill="#222" font-weight="normal" text-anchor="start" font-family="Liberation Sans" textLength="17" lengthAdjust="spacingAndGlyphs" >Source</text>
<circle cx="698" cy="244.2" r="2.7" fill="#fff" stroke="#bbb" stroke-width="0.8"/>
<text x="703.5" y="246.5" font-size="6.3" fill="#aaa" font-weight="normal" text-anchor="start" font-family="Liberation Sans" >Int</text>
<circle cx="698" cy="254.4" r="2.7" fill="#fff" stroke="#bbb" stroke-width="0.8"/>
<circle cx="698" cy="254.4" r="1.35" fill="#bbb"/>
<text x="703.5" y="256.7" font-size="6.3" fill="#aaa" font-weight="normal" text-anchor="start" font-family="Liberation Sans" >Ext</text>
<text x="737.7" y="241.2" font-size="6.3" fill="#aaa" font-weight="normal" text-anchor="start" font-family="Liberation Sans" textLength="51.7" lengthAdjust="spacingAndGlyphs" >Int. source frequency</text>
<rect x="737.4" y="243.8" width="56.6" height="10.9" fill="#cccccc" />
<text x="740" y="252" font-size="6.3" fill="#888" font-weight="normal" text-anchor="start" font-family="Liberation Sans" textLength="16" lengthAdjust="spacingAndGlyphs" >996.09</text>
<polyline points="787,247.5 789.2,249.7 791.4,247.5" fill="none" stroke="#999" stroke-width="0.6"/>
<rect x="692.2" y="265.2" width="29.699999999999932" height="10.699999999999989" fill="#e1e1e1" stroke="#adadad" stroke-width="1" />
<text x="707.05" y="272.626" font-size="6.6" fill="#000" font-weight="normal" text-anchor="middle" font-family="Liberation Sans" textLength="21" lengthAdjust="spacingAndGlyphs" >Calibrate</text>
<rect x="728.2" y="265.2" width="29.59999999999991" height="10.699999999999989" fill="#cce4f7" stroke="#0078d7" stroke-width="1" />
<text x="743.0" y="272.626" font-size="6.6" fill="#000" font-weight="normal" text-anchor="middle" font-family="Liberation Sans" textLength="22" lengthAdjust="spacingAndGlyphs" >Measure</text>
<rect x="766.7" y="259.2" width="6.5" height="5.5" fill="#fff" stroke="#333" stroke-width="0.75" />
<text x="775" y="264.5" font-size="6.3" fill="#222" font-weight="normal" text-anchor="start" font-family="Liberation Sans" textLength="16" lengthAdjust="spacingAndGlyphs" >+noise</text>
<rect x="766.7" y="269.0" width="6.5" height="5.5" fill="#fff" stroke="#ccc" stroke-width="0.75" />
<text x="775" y="274.3" font-size="6.3" fill="#bbb" font-weight="normal" text-anchor="start" font-family="Liberation Sans" textLength="11.5" lengthAdjust="spacingAndGlyphs" >Auto</text>
<rect x="766.7" y="278.0" width="6.5" height="5.699999999999989" fill="#fff" stroke="#333" stroke-width="0.75" />
<text x="775" y="283.5" font-size="6.3" fill="#222" font-weight="normal" text-anchor="start" font-family="Liberation Sans" textLength="12" lengthAdjust="spacingAndGlyphs" >Mean</text>
<text x="691.2" y="286.2" font-size="6.6" fill="#222" font-weight="normal" text-anchor="start" font-family="Liberation Sans" textLength="54.8" lengthAdjust="spacingAndGlyphs" >Master output Level %</text>
<rect x="693.2" y="293.7" width="72.3" height="2.5" fill="#e7e7e7" stroke="#dcdcdc" stroke-width="0.5" />
<rect x="694" y="290" width="0.6" height="1" fill="#aaa" />
<rect x="701" y="290" width="0.6" height="1" fill="#aaa" />
<rect x="708" y="290" width="0.6" height="1" fill="#aaa" />
<rect x="715" y="290" width="0.6" height="1" fill="#aaa" />
<rect x="722" y="290" width="0.6" height="1" fill="#aaa" />
<rect x="729" y="290" width="0.6" height="1" fill="#aaa" />
<rect x="736" y="290" width="0.6" height="1" fill="#aaa" />
<rect x="743" y="290" width="0.6" height="1" fill="#aaa" />
<rect x="750" y="290" width="0.6" height="1" fill="#aaa" />
<rect x="757" y="290" width="0.6" height="1" fill="#aaa" />
<rect x="764" y="290" width="0.6" height="1" fill="#aaa" />
<rect x="763.4" y="292.8" width="1.8" height="4.2" fill="#0078d7" />
<rect x="768.5" y="288.7" width="25.7" height="10.5" fill="#ffffff" stroke="#7a7a7a" stroke-width="0.7" />
<text x="770.5" y="296.8" font-size="6.6" fill="#222" font-weight="normal" text-anchor="start" font-family="Liberation Sans" textLength="9" lengthAdjust="spacingAndGlyphs" >100</text>
<rect x="691.2" y="301.3" width="103.5" height="8.2" fill="#e6e6e6" stroke="#bcbcbc" stroke-width="0.5" />
<rect x="691.7" y="301.8" width="64" height="7.2" fill="#06b025" />
<rect x="691.2" y="313" width="102.4" height="13.5" fill="#ffffff" stroke="#7a7a7a" stroke-width="0.8" />
<clipPath id="thdclip"><rect x="692" y="313" width="101" height="13"/></clipPath>
<text x="695.7" y="323.6" font-size="9" fill="#000" font-weight="normal" text-anchor="start" font-family="Liberation Sans" textLength="104.7" lengthAdjust="spacingAndGlyphs" clip-path="url(#thdclip)" stroke="#000" stroke-width="0.18">THD 0.0010% (1007.81Hz)</text>
<rect x="692.2" y="331.5" width="20.59999999999991" height="10.199999999999989" fill="#e1e1e1" stroke="#adadad" stroke-width="1" />
<text x="702.5" y="338.676" font-size="6.6" fill="#000" font-weight="normal" text-anchor="middle" font-family="Liberation Sans" textLength="9.5" lengthAdjust="spacingAndGlyphs" >Add</text>
<rect x="715.7" y="331.5" width="20.5" height="10.199999999999989" fill="#cccccc" stroke="#cccccc" stroke-width="1" />
<text x="725.95" y="338.676" font-size="6.6" fill="#999" font-weight="normal" text-anchor="middle" font-family="Liberation Sans" textLength="8" lengthAdjust="spacingAndGlyphs" >Del</text>
<rect x="739.0" y="331.5" width="20.700000000000045" height="10.199999999999989" fill="#e1e1e1" stroke="#adadad" stroke-width="1" />
<text x="749.35" y="338.676" font-size="6.6" fill="#000" font-weight="normal" text-anchor="middle" font-family="Liberation Sans" textLength="11" lengthAdjust="spacingAndGlyphs" >View</text>
<rect x="766.0" y="331.5" width="27.100000000000023" height="10.199999999999989" fill="#e1e1e1" stroke="#adadad" stroke-width="1" />
<text x="779.55" y="338.676" font-size="6.6" fill="#000" font-weight="normal" text-anchor="middle" font-family="Liberation Sans" textLength="23" lengthAdjust="spacingAndGlyphs" >CalReset</text>
<rect x="691.4" y="346.3" width="102.7" height="40.1" fill="#ffffff" stroke="#b4b4b4" stroke-width="0.8" />
<line x1="740.3" y1="346.5" x2="740.3" y2="357" stroke="#e5e5e5" stroke-width="0.6" />
<line x1="691.5" y1="357" x2="794" y2="357" stroke="#f0f0f0" stroke-width="0.6" />
<line x1="691.5" y1="367" x2="794" y2="367" stroke="#f0f0f0" stroke-width="0.6" />
<text x="693" y="354.5" font-size="6.3" fill="#111" font-weight="normal" text-anchor="start" font-family="Liberation Sans" textLength="26" lengthAdjust="spacingAndGlyphs" >Frequency</text>
<text x="742.5" y="354.5" font-size="6.3" fill="#111" font-weight="normal" text-anchor="start" font-family="Liberation Sans" textLength="18.5" lengthAdjust="spacingAndGlyphs" >Thd (%)</text>
<rect x="740.5" y="357.2" width="52" height="9.6" fill="#99ccff" />
<text x="697.8" y="414.3" font-size="17.8" fill="#e01b24" font-weight="bold" text-anchor="start" font-family="Liberation Sans" textLength="89" lengthAdjust="spacingAndGlyphs" >LME 49720</text></svg></body></html>
